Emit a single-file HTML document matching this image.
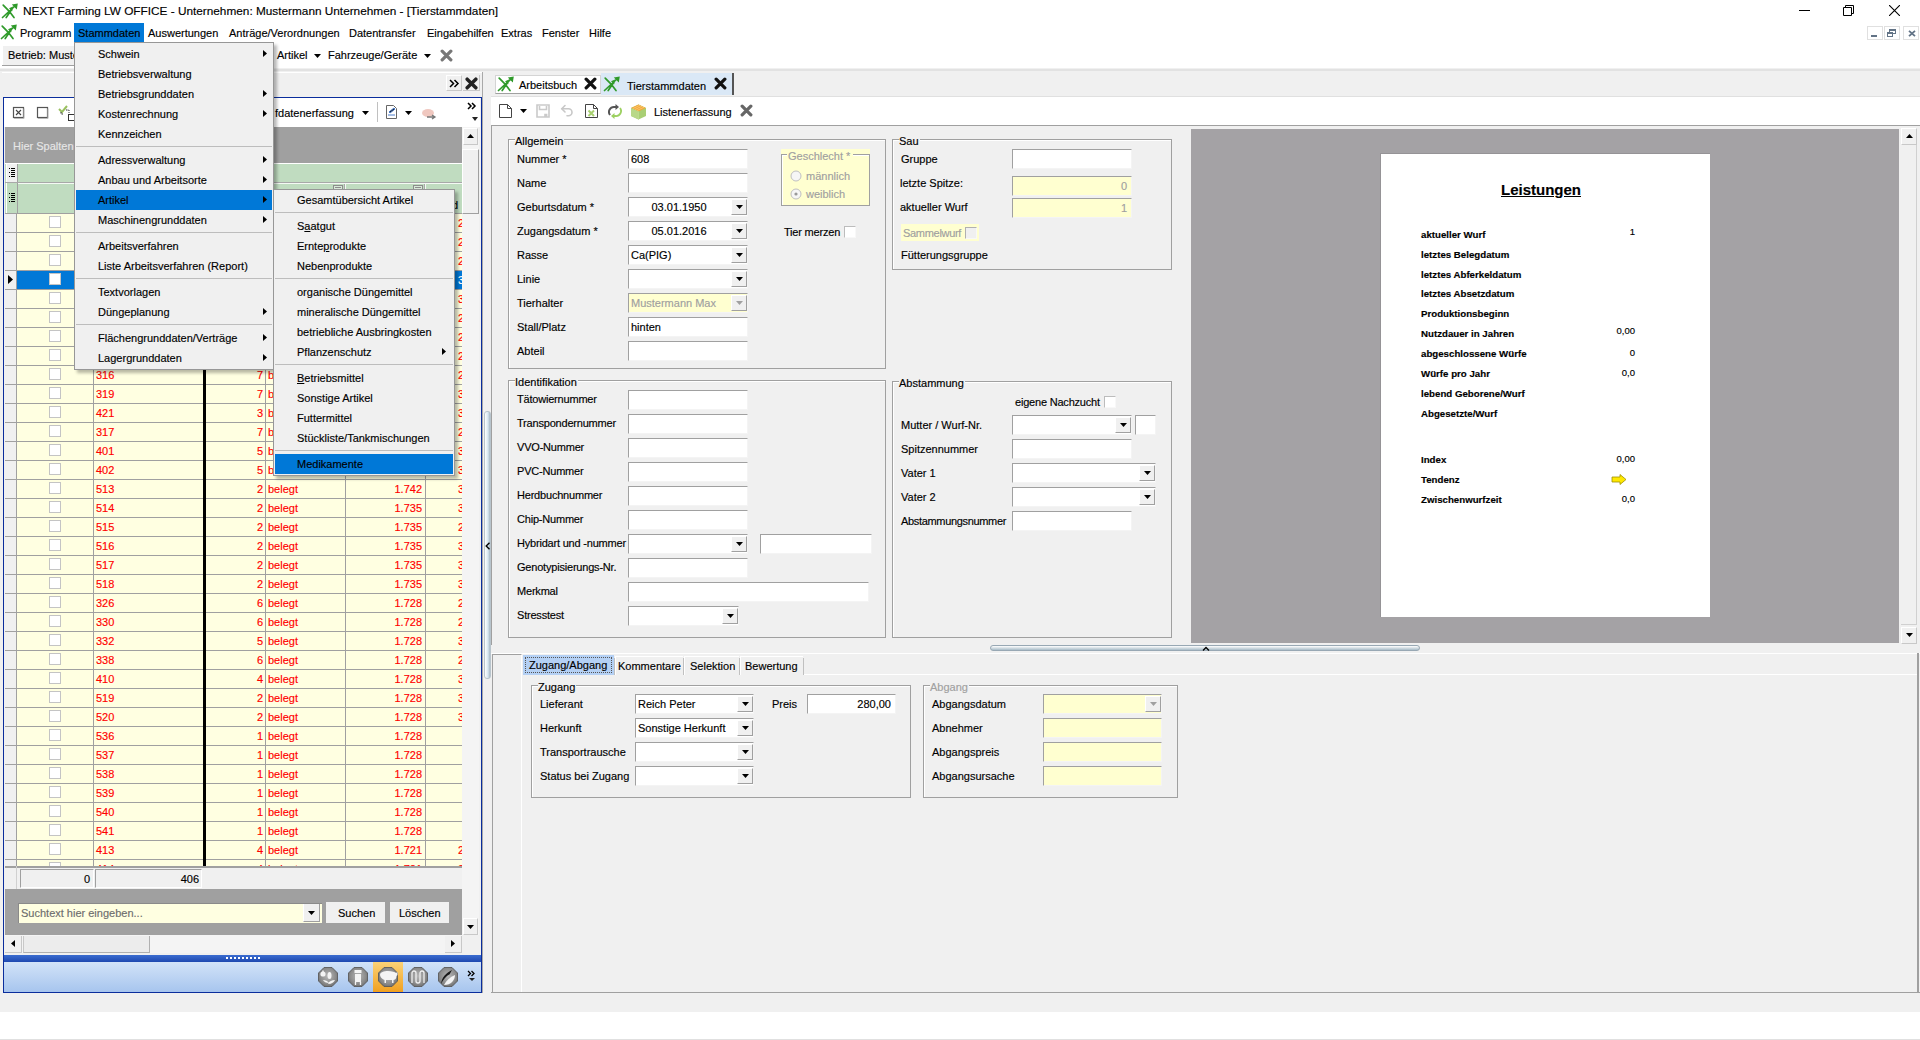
<!DOCTYPE html>
<html><head><meta charset="utf-8"><title>NEXT Farming LW OFFICE</title>
<style>
*{margin:0;padding:0;box-sizing:border-box}
html,body{width:1920px;height:1040px;overflow:hidden;background:#fff}
body{position:relative;font-family:"Liberation Sans",sans-serif;font-size:11px;color:#000}
div,svg{position:absolute}
.t{white-space:nowrap;-webkit-text-stroke:0.15px currentColor}
.inp{border-top:1px solid #a0a0a0;border-left:1px solid #a0a0a0;border-right:1px solid #f4f4f4;border-bottom:1px solid #f4f4f4}
.btn{background:#f0f0f0;border-top:1px solid #fff;border-left:1px solid #fff;border-right:1px solid #a0a0a0;border-bottom:1px solid #a0a0a0}
.grp{border:1px solid #a0a0a0;box-shadow:inset 1px 1px 0 #fff}
</style></head><body>
<svg style="position:absolute;left:1px;top:3px" width="18" height="16" viewBox="0 0 18 16"><path d="M1.5 14.5L14.5 2.5M5.2 14.5L10.5 6.8M2.2 2.2L7.6 7.6M9.2 9.6L13 14.5" stroke="#2f9a2a" stroke-width="1.7" stroke-linecap="round" fill="none"/><path d="M16.8 0.6L10.8 1.6L15.8 6.6Z M12 3.6L8 5.2L11.2 8.2Z" fill="#2f9a2a"/></svg><div class="t" style="left:23px;top:4px;height:14px;line-height:14px;font-size:11.8px">NEXT Farming LW OFFICE - Unternehmen: Mustermann Unternehmen - [Tierstammdaten]</div><div style="left:1799px;top:10px;width:11px;height:1px;background:#000"></div><svg style="position:absolute;left:1843px;top:5px" width="11" height="11" viewBox="0 0 11 11"><path d="M0.5 2.5h8v8h-8z M2.5 2.5v-2h8v8h-2" stroke="#000" fill="none"/></svg><svg style="position:absolute;left:1889px;top:5px" width="11" height="11" viewBox="0 0 11 11"><path d="M0 0L11 11M11 0L0 11" stroke="#000" stroke-width="1.1"/></svg><svg style="position:absolute;left:0px;top:24px" width="18" height="16" viewBox="0 0 18 16"><path d="M1.5 14.5L14.5 2.5M5.2 14.5L10.5 6.8M2.2 2.2L7.6 7.6M9.2 9.6L13 14.5" stroke="#2f9a2a" stroke-width="1.7" stroke-linecap="round" fill="none"/><path d="M16.8 0.6L10.8 1.6L15.8 6.6Z M12 3.6L8 5.2L11.2 8.2Z" fill="#2f9a2a"/></svg><div style="left:74px;top:23px;width:70px;height:19px;background:#0078d7"></div><div class="t" style="left:20px;top:26px;height:14px;line-height:14px;">Programm</div><div class="t" style="left:78px;top:26px;height:14px;line-height:14px;">Stammdaten</div><div class="t" style="left:148px;top:26px;height:14px;line-height:14px;">Auswertungen</div><div class="t" style="left:229px;top:26px;height:14px;line-height:14px;">Antr&auml;ge/Verordnungen</div><div class="t" style="left:349px;top:26px;height:14px;line-height:14px;">Datentransfer</div><div class="t" style="left:427px;top:26px;height:14px;line-height:14px;">Eingabehilfen</div><div class="t" style="left:501px;top:26px;height:14px;line-height:14px;">Extras</div><div class="t" style="left:542px;top:26px;height:14px;line-height:14px;">Fenster</div><div class="t" style="left:589px;top:26px;height:14px;line-height:14px;">Hilfe</div><div style="left:1867px;top:26px;width:16px;height:14px;border:1px solid #e0e0e0;background:#fff"></div><div style="left:1884px;top:26px;width:16px;height:14px;border:1px solid #e0e0e0;background:#fff"></div><div style="left:1903px;top:26px;width:16px;height:14px;border:1px solid #e0e0e0;background:#fff"></div><div style="left:1871px;top:35px;width:6px;height:2px;background:#627386"></div><svg style="position:absolute;left:1887px;top:29px" width="9" height="8" viewBox="0 0 9 8" shape-rendering="crispEdges"><path d="M0.5 3.5h5v4h-5z" stroke="#627386" fill="none"/><rect x="0" y="3" width="6" height="2" fill="#627386"/><path d="M2.5 2.5V0.5h6v4h-3" stroke="#627386" fill="none"/><rect x="2" y="0" width="7" height="2" fill="#627386"/></svg><svg style="position:absolute;left:1908px;top:30px" width="8" height="7" viewBox="0 0 8 7"><path d="M1 0.8L7 6.2M7 0.8L1 6.2" stroke="#627386" stroke-width="1.8"/></svg><div style="left:3px;top:46px;width:270px;height:19px;background:#f0f0f0"></div><div style="left:2px;top:65px;width:270px;height:1px;background:#a0a0a0"></div><div class="t" style="left:8px;top:48px;height:14px;line-height:14px;">Betrieb: Mustermann</div><div class="t" style="left:277px;top:48px;height:14px;line-height:14px;">Artikel</div><svg style="position:absolute;left:314px;top:54px" width="7" height="4" viewBox="0 0 7 4"><path d="M0 0H7L3.5 4Z" fill="#000"/></svg><div class="t" style="left:328px;top:48px;height:14px;line-height:14px;">Fahrzeuge/Ger&auml;te</div><svg style="position:absolute;left:424px;top:54px" width="7" height="4" viewBox="0 0 7 4"><path d="M0 0H7L3.5 4Z" fill="#000"/></svg><svg style="position:absolute;left:440px;top:49px" width="13" height="13" viewBox="0 0 12 12"><path d="M2 2L10 10M10 2L2 10" stroke="#777" stroke-width="3" stroke-linecap="round"/></svg><div style="left:0px;top:68px;width:1920px;height:944px;background:#f0f0f0"></div><div style="left:0px;top:69px;width:1920px;height:2px;background:#e2e2e2"></div><div style="left:0px;top:1012px;width:1920px;height:28px;background:#fff"></div><div style="left:0px;top:1039px;width:1920px;height:1px;background:#e0e0e0"></div><div style="left:2px;top:72px;width:480px;height:25px;background:#f0f0f0;border-top:1px solid #fff"></div><div style="left:446px;top:75px;width:16px;height:16px;background:#f0f0f0;border-right:1px solid #c8c8c8;border-bottom:1px solid #c8c8c8;border-left:1px solid #fff;border-top:1px solid #fff"></div><svg style="position:absolute;left:449px;top:79px" width="11" height="9" viewBox="0 0 11 9"><path d="M1 1l3.5 3.5-3.5 3.5M5.5 1l3.5 3.5-3.5 3.5" stroke="#000" stroke-width="1.5" fill="none"/></svg><div style="left:463px;top:75px;width:17px;height:16px;background:#f0f0f0;border-right:1px solid #c8c8c8;border-bottom:1px solid #c8c8c8"></div><svg style="position:absolute;left:465px;top:77px" width="13" height="13" viewBox="0 0 12 12"><path d="M2 2L10 10M10 2L2 10" stroke="#222" stroke-width="3.2" stroke-linecap="round"/></svg><div style="left:482px;top:72px;width:1px;height:921px;background:#a9a9a9"></div><div style="left:3px;top:97px;width:479px;height:896px;border:1px solid #0a2d9c;border-right:1.5px solid #0a2d9c;background:#f0f0f0"></div><div style="left:4px;top:98px;width:476px;height:29px;background:#fff"></div><svg style="position:absolute;left:12px;top:106px" width="14" height="14" viewBox="0 0 14 14"><rect x="1.5" y="1.5" width="10" height="10" fill="#fff" stroke="#555" stroke-width="1.2"/><path d="M12 2.5v10h-10" stroke="#bbb" fill="none"/><path d="M4 4L9 9M9 4L4 9" stroke="#444" stroke-width="1.1"/></svg><svg style="position:absolute;left:36px;top:106px" width="14" height="14" viewBox="0 0 14 14"><rect x="1.5" y="1.5" width="10" height="10" fill="#fff" stroke="#555" stroke-width="1.2"/><path d="M12 2.5v10h-10" stroke="#bbb" fill="none"/></svg><svg style="position:absolute;left:58px;top:104px" width="18" height="17" viewBox="0 0 18 17"><path d="M1 5L4 8L9 2" stroke="#9ac060" stroke-width="2" fill="none"/><path d="M3 8v2h3M8 6h3v3" stroke="#333" fill="none" stroke-dasharray="1.5 1"/><rect x="10.5" y="10.5" width="6" height="6" fill="#fff" stroke="#333"/></svg><div class="t" style="left:275px;top:106px;height:14px;line-height:14px;">fdatenerfassung</div><svg style="position:absolute;left:362px;top:111px" width="7" height="4" viewBox="0 0 7 4"><path d="M0 0H7L3.5 4Z" fill="#000"/></svg><div style="left:377px;top:102px;width:1px;height:20px;background:#c0c0c0"></div><svg style="position:absolute;left:385px;top:104px" width="14" height="16" viewBox="0 0 14 16"><path d="M1.5 1.5h7l3 3v10h-10z" fill="#fff" stroke="#666"/><path d="M4 8l5-4 1 1-5 4zM3 11h7" stroke="#4a7bc8" stroke-width="1"/></svg><svg style="position:absolute;left:405px;top:111px" width="7" height="4" viewBox="0 0 7 4"><path d="M0 0H7L3.5 4Z" fill="#000"/></svg><svg style="position:absolute;left:420px;top:108px" width="17" height="12" viewBox="0 0 17 12"><ellipse cx="8" cy="5" rx="6" ry="4" fill="#f0c8c0"/><path d="M7 9h8M12 7l3 2-3 2" stroke="#777" stroke-width="1.3" fill="none"/></svg><svg style="position:absolute;left:467px;top:102px" width="10" height="8" viewBox="0 0 10 8"><path d="M1 1l3 3-3 3M5 1l3 3-3 3" stroke="#000" stroke-width="1.5" fill="none"/></svg><svg style="position:absolute;left:472px;top:117px" width="6" height="4" viewBox="0 0 6 4"><path d="M0 0H6L3.0 4Z" fill="#222"/></svg><div style="left:5px;top:127px;width:457px;height:36px;background:#a0a0a0"></div><div class="t" style="left:13px;top:139px;height:14px;line-height:14px;color:#e6e6e6">Hier Spalten&uuml;berschrift hierher ziehen</div><div style="left:5px;top:163px;width:457px;height:1px;background:#fff"></div><div style="left:5px;top:164px;width:457px;height:18px;background:#c0dcc0"></div><div style="left:5px;top:182px;width:457px;height:1px;background:#a8a8a8"></div><div style="left:5px;top:183px;width:457px;height:30px;background:#c0dcc0"></div><div style="left:6px;top:164px;width:12px;height:18px;background:#f0f0f0;border-right:1px solid #a0a0a0;border-left:1px solid #fff"></div><svg style="position:absolute;left:9px;top:168px" width="7" height="10" viewBox="0 0 7 10" shape-rendering="crispEdges"><rect x="0" y="0" width="1" height="1" fill="#000"/><rect x="0" y="4" width="1" height="1" fill="#000"/><rect x="0" y="8" width="1" height="1" fill="#000"/><rect x="2" y="0" width="4" height="1" fill="#000"/><rect x="2" y="2" width="4" height="1" fill="#000"/><rect x="2" y="4" width="4" height="1" fill="#000"/><rect x="2" y="6" width="4" height="1" fill="#000"/><rect x="2" y="8" width="4" height="1" fill="#000"/></svg><div style="left:6px;top:183px;width:12px;height:30px;border-right:1px solid #a0a0a0;border-left:1px solid #fff"></div><svg style="position:absolute;left:9px;top:193px" width="7" height="10" viewBox="0 0 7 10" shape-rendering="crispEdges"><rect x="0" y="0" width="1" height="1" fill="#000"/><rect x="0" y="4" width="1" height="1" fill="#000"/><rect x="0" y="8" width="1" height="1" fill="#000"/><rect x="2" y="0" width="4" height="1" fill="#000"/><rect x="2" y="2" width="4" height="1" fill="#000"/><rect x="2" y="4" width="4" height="1" fill="#000"/><rect x="2" y="6" width="4" height="1" fill="#000"/><rect x="2" y="8" width="4" height="1" fill="#000"/></svg><div style="left:92px;top:184px;width:1px;height:29px;background:#a8a8a8"></div><div style="left:93px;top:184px;width:1px;height:29px;background:#f4faf4"></div><div style="left:203px;top:184px;width:1px;height:29px;background:#a8a8a8"></div><div style="left:204px;top:184px;width:1px;height:29px;background:#f4faf4"></div><div style="left:264px;top:184px;width:1px;height:29px;background:#a8a8a8"></div><div style="left:265px;top:184px;width:1px;height:29px;background:#f4faf4"></div><div style="left:344px;top:184px;width:1px;height:29px;background:#a8a8a8"></div><div style="left:345px;top:184px;width:1px;height:29px;background:#f4faf4"></div><div style="left:424px;top:184px;width:1px;height:29px;background:#a8a8a8"></div><div style="left:425px;top:184px;width:1px;height:29px;background:#f4faf4"></div><div style="left:18px;top:183px;width:444px;height:1px;background:#f4faf4"></div><div style="left:333px;top:185px;width:10px;height:8px;border:1px solid #8c8c8c;background:#d8e8d8"></div><div style="left:335px;top:187px;width:6px;height:1px;background:#8c8c8c"></div><div style="left:413px;top:185px;width:10px;height:8px;border:1px solid #8c8c8c;background:#d8e8d8"></div><div style="left:415px;top:187px;width:6px;height:1px;background:#8c8c8c"></div><div class="t" style="left:452px;top:198px;height:14px;line-height:14px;">d</div><div style="left:5px;top:213px;width:457px;height:1px;background:#a0a0a0"></div><div style="left:5px;top:214px;width:457px;height:652px;overflow:hidden;background:#ffffe1"><div style="left:0;top:0px;width:457px;height:19px;background:#ffffe1;border-bottom:1px solid #a0a0a0"></div><div style="left:0;top:0px;width:12px;height:19px;background:#f0f0f0;border-right:1px solid #a0a0a0;border-bottom:1px solid #a0a0a0"></div><div style="left:88px;top:0px;width:1px;height:19px;background:#a0a0a0"></div><div style="left:340px;top:0px;width:1px;height:19px;background:#a0a0a0"></div><div style="left:420px;top:0px;width:1px;height:19px;background:#a0a0a0"></div><div style="left:260px;top:0px;width:1px;height:19px;background:#a0a0a0"></div><div style="left:198px;top:0px;width:3px;height:19px;background:#000"></div><div style="left:44px;top:2px;width:12px;height:12px;background:#fff;border:1px solid #c4c4c4"></div><div class="t" style="left:201px;top:2px;width:57px;text-align:right;line-height:14px;color:#f00">2</div><div class="t" style="left:453px;top:2px;line-height:14px;color:#f00">2</div><div style="left:0;top:19px;width:457px;height:19px;background:#ffffe1;border-bottom:1px solid #a0a0a0"></div><div style="left:0;top:19px;width:12px;height:19px;background:#f0f0f0;border-right:1px solid #a0a0a0;border-bottom:1px solid #a0a0a0"></div><div style="left:88px;top:19px;width:1px;height:19px;background:#a0a0a0"></div><div style="left:340px;top:19px;width:1px;height:19px;background:#a0a0a0"></div><div style="left:420px;top:19px;width:1px;height:19px;background:#a0a0a0"></div><div style="left:260px;top:19px;width:1px;height:19px;background:#a0a0a0"></div><div style="left:198px;top:19px;width:3px;height:19px;background:#000"></div><div style="left:44px;top:21px;width:12px;height:12px;background:#fff;border:1px solid #c4c4c4"></div><div class="t" style="left:201px;top:21px;width:57px;text-align:right;line-height:14px;color:#f00">2</div><div class="t" style="left:453px;top:21px;line-height:14px;color:#f00">2</div><div style="left:0;top:38px;width:457px;height:19px;background:#ffffe1;border-bottom:1px solid #a0a0a0"></div><div style="left:0;top:38px;width:12px;height:19px;background:#f0f0f0;border-right:1px solid #a0a0a0;border-bottom:1px solid #a0a0a0"></div><div style="left:88px;top:38px;width:1px;height:19px;background:#a0a0a0"></div><div style="left:340px;top:38px;width:1px;height:19px;background:#a0a0a0"></div><div style="left:420px;top:38px;width:1px;height:19px;background:#a0a0a0"></div><div style="left:260px;top:38px;width:1px;height:19px;background:#a0a0a0"></div><div style="left:198px;top:38px;width:3px;height:19px;background:#000"></div><div style="left:44px;top:40px;width:12px;height:12px;background:#fff;border:1px solid #c4c4c4"></div><div class="t" style="left:201px;top:40px;width:57px;text-align:right;line-height:14px;color:#f00">2</div><div class="t" style="left:453px;top:40px;line-height:14px;color:#f00">2</div><div style="left:0;top:57px;width:457px;height:19px;background:#0078d7;border-bottom:1px solid #a0a0a0"></div><div style="left:0;top:57px;width:12px;height:19px;background:#f0f0f0;border-right:1px solid #a0a0a0;border-bottom:1px solid #a0a0a0"></div><svg style="position:absolute;left:3px;top:61px" width="5" height="9" viewBox="0 0 5 9"><path d="M0 0L5 4.5L0 9Z" fill="#000"/></svg><div style="left:88px;top:57px;width:1px;height:19px;background:#a0a0a0"></div><div style="left:340px;top:57px;width:1px;height:19px;background:#a0a0a0"></div><div style="left:420px;top:57px;width:1px;height:19px;background:#a0a0a0"></div><div style="left:260px;top:57px;width:1px;height:19px;background:#a0a0a0"></div><div style="left:198px;top:57px;width:3px;height:19px;background:#000"></div><div style="left:44px;top:59px;width:12px;height:12px;background:#fff;border:1px solid #c4c4c4"></div><div class="t" style="left:201px;top:59px;width:57px;text-align:right;line-height:14px;color:#fff">2</div><div class="t" style="left:453px;top:59px;line-height:14px;color:#fff">3</div><div style="left:0;top:76px;width:457px;height:19px;background:#ffffe1;border-bottom:1px solid #a0a0a0"></div><div style="left:0;top:76px;width:12px;height:19px;background:#f0f0f0;border-right:1px solid #a0a0a0;border-bottom:1px solid #a0a0a0"></div><div style="left:88px;top:76px;width:1px;height:19px;background:#a0a0a0"></div><div style="left:340px;top:76px;width:1px;height:19px;background:#a0a0a0"></div><div style="left:420px;top:76px;width:1px;height:19px;background:#a0a0a0"></div><div style="left:260px;top:76px;width:1px;height:19px;background:#a0a0a0"></div><div style="left:198px;top:76px;width:3px;height:19px;background:#000"></div><div style="left:44px;top:78px;width:12px;height:12px;background:#fff;border:1px solid #c4c4c4"></div><div class="t" style="left:201px;top:78px;width:57px;text-align:right;line-height:14px;color:#f00">2</div><div class="t" style="left:453px;top:78px;line-height:14px;color:#f00">3</div><div style="left:0;top:95px;width:457px;height:19px;background:#ffffe1;border-bottom:1px solid #a0a0a0"></div><div style="left:0;top:95px;width:12px;height:19px;background:#f0f0f0;border-right:1px solid #a0a0a0;border-bottom:1px solid #a0a0a0"></div><div style="left:88px;top:95px;width:1px;height:19px;background:#a0a0a0"></div><div style="left:340px;top:95px;width:1px;height:19px;background:#a0a0a0"></div><div style="left:420px;top:95px;width:1px;height:19px;background:#a0a0a0"></div><div style="left:260px;top:95px;width:1px;height:19px;background:#a0a0a0"></div><div style="left:198px;top:95px;width:3px;height:19px;background:#000"></div><div style="left:44px;top:97px;width:12px;height:12px;background:#fff;border:1px solid #c4c4c4"></div><div class="t" style="left:201px;top:97px;width:57px;text-align:right;line-height:14px;color:#f00">2</div><div class="t" style="left:453px;top:97px;line-height:14px;color:#f00">2</div><div style="left:0;top:114px;width:457px;height:19px;background:#ffffe1;border-bottom:1px solid #a0a0a0"></div><div style="left:0;top:114px;width:12px;height:19px;background:#f0f0f0;border-right:1px solid #a0a0a0;border-bottom:1px solid #a0a0a0"></div><div style="left:88px;top:114px;width:1px;height:19px;background:#a0a0a0"></div><div style="left:340px;top:114px;width:1px;height:19px;background:#a0a0a0"></div><div style="left:420px;top:114px;width:1px;height:19px;background:#a0a0a0"></div><div style="left:260px;top:114px;width:1px;height:19px;background:#a0a0a0"></div><div style="left:198px;top:114px;width:3px;height:19px;background:#000"></div><div style="left:44px;top:116px;width:12px;height:12px;background:#fff;border:1px solid #c4c4c4"></div><div class="t" style="left:201px;top:116px;width:57px;text-align:right;line-height:14px;color:#f00">2</div><div class="t" style="left:453px;top:116px;line-height:14px;color:#f00">2</div><div style="left:0;top:133px;width:457px;height:19px;background:#ffffe1;border-bottom:1px solid #a0a0a0"></div><div style="left:0;top:133px;width:12px;height:19px;background:#f0f0f0;border-right:1px solid #a0a0a0;border-bottom:1px solid #a0a0a0"></div><div style="left:88px;top:133px;width:1px;height:19px;background:#a0a0a0"></div><div style="left:340px;top:133px;width:1px;height:19px;background:#a0a0a0"></div><div style="left:420px;top:133px;width:1px;height:19px;background:#a0a0a0"></div><div style="left:260px;top:133px;width:1px;height:19px;background:#a0a0a0"></div><div style="left:198px;top:133px;width:3px;height:19px;background:#000"></div><div style="left:44px;top:135px;width:12px;height:12px;background:#fff;border:1px solid #c4c4c4"></div><div class="t" style="left:201px;top:135px;width:57px;text-align:right;line-height:14px;color:#f00">2</div><div class="t" style="left:453px;top:135px;line-height:14px;color:#f00">2</div><div style="left:0;top:152px;width:457px;height:19px;background:#ffffe1;border-bottom:1px solid #a0a0a0"></div><div style="left:0;top:152px;width:12px;height:19px;background:#f0f0f0;border-right:1px solid #a0a0a0;border-bottom:1px solid #a0a0a0"></div><div style="left:88px;top:152px;width:1px;height:19px;background:#a0a0a0"></div><div style="left:340px;top:152px;width:1px;height:19px;background:#a0a0a0"></div><div style="left:420px;top:152px;width:1px;height:19px;background:#a0a0a0"></div><div style="left:260px;top:152px;width:1px;height:19px;background:#a0a0a0"></div><div style="left:198px;top:152px;width:3px;height:19px;background:#000"></div><div style="left:44px;top:154px;width:12px;height:12px;background:#fff;border:1px solid #c4c4c4"></div><div class="t" style="left:91px;top:154px;line-height:14px;color:#f00">316</div><div class="t" style="left:201px;top:154px;width:57px;text-align:right;line-height:14px;color:#f00">7</div><div class="t" style="left:263px;top:154px;line-height:14px;color:#f00">belegt</div><div class="t" style="left:341px;top:154px;width:76px;text-align:right;line-height:14px;color:#f00">1.746</div><div class="t" style="left:453px;top:154px;line-height:14px;color:#f00">2</div><div style="left:0;top:171px;width:457px;height:19px;background:#ffffe1;border-bottom:1px solid #a0a0a0"></div><div style="left:0;top:171px;width:12px;height:19px;background:#f0f0f0;border-right:1px solid #a0a0a0;border-bottom:1px solid #a0a0a0"></div><div style="left:88px;top:171px;width:1px;height:19px;background:#a0a0a0"></div><div style="left:340px;top:171px;width:1px;height:19px;background:#a0a0a0"></div><div style="left:420px;top:171px;width:1px;height:19px;background:#a0a0a0"></div><div style="left:260px;top:171px;width:1px;height:19px;background:#a0a0a0"></div><div style="left:198px;top:171px;width:3px;height:19px;background:#000"></div><div style="left:44px;top:173px;width:12px;height:12px;background:#fff;border:1px solid #c4c4c4"></div><div class="t" style="left:91px;top:173px;line-height:14px;color:#f00">319</div><div class="t" style="left:201px;top:173px;width:57px;text-align:right;line-height:14px;color:#f00">7</div><div class="t" style="left:263px;top:173px;line-height:14px;color:#f00">belegt</div><div class="t" style="left:341px;top:173px;width:76px;text-align:right;line-height:14px;color:#f00">1.746</div><div class="t" style="left:453px;top:173px;line-height:14px;color:#f00">3</div><div style="left:0;top:190px;width:457px;height:19px;background:#ffffe1;border-bottom:1px solid #a0a0a0"></div><div style="left:0;top:190px;width:12px;height:19px;background:#f0f0f0;border-right:1px solid #a0a0a0;border-bottom:1px solid #a0a0a0"></div><div style="left:88px;top:190px;width:1px;height:19px;background:#a0a0a0"></div><div style="left:340px;top:190px;width:1px;height:19px;background:#a0a0a0"></div><div style="left:420px;top:190px;width:1px;height:19px;background:#a0a0a0"></div><div style="left:260px;top:190px;width:1px;height:19px;background:#a0a0a0"></div><div style="left:198px;top:190px;width:3px;height:19px;background:#000"></div><div style="left:44px;top:192px;width:12px;height:12px;background:#fff;border:1px solid #c4c4c4"></div><div class="t" style="left:91px;top:192px;line-height:14px;color:#f00">421</div><div class="t" style="left:201px;top:192px;width:57px;text-align:right;line-height:14px;color:#f00">3</div><div class="t" style="left:263px;top:192px;line-height:14px;color:#f00">belegt</div><div class="t" style="left:341px;top:192px;width:76px;text-align:right;line-height:14px;color:#f00">1.742</div><div class="t" style="left:453px;top:192px;line-height:14px;color:#f00">3</div><div style="left:0;top:209px;width:457px;height:19px;background:#ffffe1;border-bottom:1px solid #a0a0a0"></div><div style="left:0;top:209px;width:12px;height:19px;background:#f0f0f0;border-right:1px solid #a0a0a0;border-bottom:1px solid #a0a0a0"></div><div style="left:88px;top:209px;width:1px;height:19px;background:#a0a0a0"></div><div style="left:340px;top:209px;width:1px;height:19px;background:#a0a0a0"></div><div style="left:420px;top:209px;width:1px;height:19px;background:#a0a0a0"></div><div style="left:260px;top:209px;width:1px;height:19px;background:#a0a0a0"></div><div style="left:198px;top:209px;width:3px;height:19px;background:#000"></div><div style="left:44px;top:211px;width:12px;height:12px;background:#fff;border:1px solid #c4c4c4"></div><div class="t" style="left:91px;top:211px;line-height:14px;color:#f00">317</div><div class="t" style="left:201px;top:211px;width:57px;text-align:right;line-height:14px;color:#f00">7</div><div class="t" style="left:263px;top:211px;line-height:14px;color:#f00">belegt</div><div class="t" style="left:341px;top:211px;width:76px;text-align:right;line-height:14px;color:#f00">1.742</div><div class="t" style="left:453px;top:211px;line-height:14px;color:#f00">2</div><div style="left:0;top:228px;width:457px;height:19px;background:#ffffe1;border-bottom:1px solid #a0a0a0"></div><div style="left:0;top:228px;width:12px;height:19px;background:#f0f0f0;border-right:1px solid #a0a0a0;border-bottom:1px solid #a0a0a0"></div><div style="left:88px;top:228px;width:1px;height:19px;background:#a0a0a0"></div><div style="left:340px;top:228px;width:1px;height:19px;background:#a0a0a0"></div><div style="left:420px;top:228px;width:1px;height:19px;background:#a0a0a0"></div><div style="left:260px;top:228px;width:1px;height:19px;background:#a0a0a0"></div><div style="left:198px;top:228px;width:3px;height:19px;background:#000"></div><div style="left:44px;top:230px;width:12px;height:12px;background:#fff;border:1px solid #c4c4c4"></div><div class="t" style="left:91px;top:230px;line-height:14px;color:#f00">401</div><div class="t" style="left:201px;top:230px;width:57px;text-align:right;line-height:14px;color:#f00">5</div><div class="t" style="left:263px;top:230px;line-height:14px;color:#f00">belegt</div><div class="t" style="left:341px;top:230px;width:76px;text-align:right;line-height:14px;color:#f00">1.742</div><div class="t" style="left:453px;top:230px;line-height:14px;color:#f00">3</div><div style="left:0;top:247px;width:457px;height:19px;background:#ffffe1;border-bottom:1px solid #a0a0a0"></div><div style="left:0;top:247px;width:12px;height:19px;background:#f0f0f0;border-right:1px solid #a0a0a0;border-bottom:1px solid #a0a0a0"></div><div style="left:88px;top:247px;width:1px;height:19px;background:#a0a0a0"></div><div style="left:340px;top:247px;width:1px;height:19px;background:#a0a0a0"></div><div style="left:420px;top:247px;width:1px;height:19px;background:#a0a0a0"></div><div style="left:260px;top:247px;width:1px;height:19px;background:#a0a0a0"></div><div style="left:198px;top:247px;width:3px;height:19px;background:#000"></div><div style="left:44px;top:249px;width:12px;height:12px;background:#fff;border:1px solid #c4c4c4"></div><div class="t" style="left:91px;top:249px;line-height:14px;color:#f00">402</div><div class="t" style="left:201px;top:249px;width:57px;text-align:right;line-height:14px;color:#f00">5</div><div class="t" style="left:263px;top:249px;line-height:14px;color:#f00">belegt</div><div class="t" style="left:341px;top:249px;width:76px;text-align:right;line-height:14px;color:#f00">1.742</div><div class="t" style="left:453px;top:249px;line-height:14px;color:#f00">3</div><div style="left:0;top:266px;width:457px;height:19px;background:#ffffe1;border-bottom:1px solid #a0a0a0"></div><div style="left:0;top:266px;width:12px;height:19px;background:#f0f0f0;border-right:1px solid #a0a0a0;border-bottom:1px solid #a0a0a0"></div><div style="left:88px;top:266px;width:1px;height:19px;background:#a0a0a0"></div><div style="left:340px;top:266px;width:1px;height:19px;background:#a0a0a0"></div><div style="left:420px;top:266px;width:1px;height:19px;background:#a0a0a0"></div><div style="left:260px;top:266px;width:1px;height:19px;background:#a0a0a0"></div><div style="left:198px;top:266px;width:3px;height:19px;background:#000"></div><div style="left:44px;top:268px;width:12px;height:12px;background:#fff;border:1px solid #c4c4c4"></div><div class="t" style="left:91px;top:268px;line-height:14px;color:#f00">513</div><div class="t" style="left:201px;top:268px;width:57px;text-align:right;line-height:14px;color:#f00">2</div><div class="t" style="left:263px;top:268px;line-height:14px;color:#f00">belegt</div><div class="t" style="left:341px;top:268px;width:76px;text-align:right;line-height:14px;color:#f00">1.742</div><div class="t" style="left:453px;top:268px;line-height:14px;color:#f00">3</div><div style="left:0;top:285px;width:457px;height:19px;background:#ffffe1;border-bottom:1px solid #a0a0a0"></div><div style="left:0;top:285px;width:12px;height:19px;background:#f0f0f0;border-right:1px solid #a0a0a0;border-bottom:1px solid #a0a0a0"></div><div style="left:88px;top:285px;width:1px;height:19px;background:#a0a0a0"></div><div style="left:340px;top:285px;width:1px;height:19px;background:#a0a0a0"></div><div style="left:420px;top:285px;width:1px;height:19px;background:#a0a0a0"></div><div style="left:260px;top:285px;width:1px;height:19px;background:#a0a0a0"></div><div style="left:198px;top:285px;width:3px;height:19px;background:#000"></div><div style="left:44px;top:287px;width:12px;height:12px;background:#fff;border:1px solid #c4c4c4"></div><div class="t" style="left:91px;top:287px;line-height:14px;color:#f00">514</div><div class="t" style="left:201px;top:287px;width:57px;text-align:right;line-height:14px;color:#f00">2</div><div class="t" style="left:263px;top:287px;line-height:14px;color:#f00">belegt</div><div class="t" style="left:341px;top:287px;width:76px;text-align:right;line-height:14px;color:#f00">1.735</div><div class="t" style="left:453px;top:287px;line-height:14px;color:#f00">3</div><div style="left:0;top:304px;width:457px;height:19px;background:#ffffe1;border-bottom:1px solid #a0a0a0"></div><div style="left:0;top:304px;width:12px;height:19px;background:#f0f0f0;border-right:1px solid #a0a0a0;border-bottom:1px solid #a0a0a0"></div><div style="left:88px;top:304px;width:1px;height:19px;background:#a0a0a0"></div><div style="left:340px;top:304px;width:1px;height:19px;background:#a0a0a0"></div><div style="left:420px;top:304px;width:1px;height:19px;background:#a0a0a0"></div><div style="left:260px;top:304px;width:1px;height:19px;background:#a0a0a0"></div><div style="left:198px;top:304px;width:3px;height:19px;background:#000"></div><div style="left:44px;top:306px;width:12px;height:12px;background:#fff;border:1px solid #c4c4c4"></div><div class="t" style="left:91px;top:306px;line-height:14px;color:#f00">515</div><div class="t" style="left:201px;top:306px;width:57px;text-align:right;line-height:14px;color:#f00">2</div><div class="t" style="left:263px;top:306px;line-height:14px;color:#f00">belegt</div><div class="t" style="left:341px;top:306px;width:76px;text-align:right;line-height:14px;color:#f00">1.735</div><div class="t" style="left:453px;top:306px;line-height:14px;color:#f00">2</div><div style="left:0;top:323px;width:457px;height:19px;background:#ffffe1;border-bottom:1px solid #a0a0a0"></div><div style="left:0;top:323px;width:12px;height:19px;background:#f0f0f0;border-right:1px solid #a0a0a0;border-bottom:1px solid #a0a0a0"></div><div style="left:88px;top:323px;width:1px;height:19px;background:#a0a0a0"></div><div style="left:340px;top:323px;width:1px;height:19px;background:#a0a0a0"></div><div style="left:420px;top:323px;width:1px;height:19px;background:#a0a0a0"></div><div style="left:260px;top:323px;width:1px;height:19px;background:#a0a0a0"></div><div style="left:198px;top:323px;width:3px;height:19px;background:#000"></div><div style="left:44px;top:325px;width:12px;height:12px;background:#fff;border:1px solid #c4c4c4"></div><div class="t" style="left:91px;top:325px;line-height:14px;color:#f00">516</div><div class="t" style="left:201px;top:325px;width:57px;text-align:right;line-height:14px;color:#f00">2</div><div class="t" style="left:263px;top:325px;line-height:14px;color:#f00">belegt</div><div class="t" style="left:341px;top:325px;width:76px;text-align:right;line-height:14px;color:#f00">1.735</div><div class="t" style="left:453px;top:325px;line-height:14px;color:#f00">3</div><div style="left:0;top:342px;width:457px;height:19px;background:#ffffe1;border-bottom:1px solid #a0a0a0"></div><div style="left:0;top:342px;width:12px;height:19px;background:#f0f0f0;border-right:1px solid #a0a0a0;border-bottom:1px solid #a0a0a0"></div><div style="left:88px;top:342px;width:1px;height:19px;background:#a0a0a0"></div><div style="left:340px;top:342px;width:1px;height:19px;background:#a0a0a0"></div><div style="left:420px;top:342px;width:1px;height:19px;background:#a0a0a0"></div><div style="left:260px;top:342px;width:1px;height:19px;background:#a0a0a0"></div><div style="left:198px;top:342px;width:3px;height:19px;background:#000"></div><div style="left:44px;top:344px;width:12px;height:12px;background:#fff;border:1px solid #c4c4c4"></div><div class="t" style="left:91px;top:344px;line-height:14px;color:#f00">517</div><div class="t" style="left:201px;top:344px;width:57px;text-align:right;line-height:14px;color:#f00">2</div><div class="t" style="left:263px;top:344px;line-height:14px;color:#f00">belegt</div><div class="t" style="left:341px;top:344px;width:76px;text-align:right;line-height:14px;color:#f00">1.735</div><div class="t" style="left:453px;top:344px;line-height:14px;color:#f00">3</div><div style="left:0;top:361px;width:457px;height:19px;background:#ffffe1;border-bottom:1px solid #a0a0a0"></div><div style="left:0;top:361px;width:12px;height:19px;background:#f0f0f0;border-right:1px solid #a0a0a0;border-bottom:1px solid #a0a0a0"></div><div style="left:88px;top:361px;width:1px;height:19px;background:#a0a0a0"></div><div style="left:340px;top:361px;width:1px;height:19px;background:#a0a0a0"></div><div style="left:420px;top:361px;width:1px;height:19px;background:#a0a0a0"></div><div style="left:260px;top:361px;width:1px;height:19px;background:#a0a0a0"></div><div style="left:198px;top:361px;width:3px;height:19px;background:#000"></div><div style="left:44px;top:363px;width:12px;height:12px;background:#fff;border:1px solid #c4c4c4"></div><div class="t" style="left:91px;top:363px;line-height:14px;color:#f00">518</div><div class="t" style="left:201px;top:363px;width:57px;text-align:right;line-height:14px;color:#f00">2</div><div class="t" style="left:263px;top:363px;line-height:14px;color:#f00">belegt</div><div class="t" style="left:341px;top:363px;width:76px;text-align:right;line-height:14px;color:#f00">1.735</div><div class="t" style="left:453px;top:363px;line-height:14px;color:#f00">3</div><div style="left:0;top:380px;width:457px;height:19px;background:#ffffe1;border-bottom:1px solid #a0a0a0"></div><div style="left:0;top:380px;width:12px;height:19px;background:#f0f0f0;border-right:1px solid #a0a0a0;border-bottom:1px solid #a0a0a0"></div><div style="left:88px;top:380px;width:1px;height:19px;background:#a0a0a0"></div><div style="left:340px;top:380px;width:1px;height:19px;background:#a0a0a0"></div><div style="left:420px;top:380px;width:1px;height:19px;background:#a0a0a0"></div><div style="left:260px;top:380px;width:1px;height:19px;background:#a0a0a0"></div><div style="left:198px;top:380px;width:3px;height:19px;background:#000"></div><div style="left:44px;top:382px;width:12px;height:12px;background:#fff;border:1px solid #c4c4c4"></div><div class="t" style="left:91px;top:382px;line-height:14px;color:#f00">326</div><div class="t" style="left:201px;top:382px;width:57px;text-align:right;line-height:14px;color:#f00">6</div><div class="t" style="left:263px;top:382px;line-height:14px;color:#f00">belegt</div><div class="t" style="left:341px;top:382px;width:76px;text-align:right;line-height:14px;color:#f00">1.728</div><div class="t" style="left:453px;top:382px;line-height:14px;color:#f00">2</div><div style="left:0;top:399px;width:457px;height:19px;background:#ffffe1;border-bottom:1px solid #a0a0a0"></div><div style="left:0;top:399px;width:12px;height:19px;background:#f0f0f0;border-right:1px solid #a0a0a0;border-bottom:1px solid #a0a0a0"></div><div style="left:88px;top:399px;width:1px;height:19px;background:#a0a0a0"></div><div style="left:340px;top:399px;width:1px;height:19px;background:#a0a0a0"></div><div style="left:420px;top:399px;width:1px;height:19px;background:#a0a0a0"></div><div style="left:260px;top:399px;width:1px;height:19px;background:#a0a0a0"></div><div style="left:198px;top:399px;width:3px;height:19px;background:#000"></div><div style="left:44px;top:401px;width:12px;height:12px;background:#fff;border:1px solid #c4c4c4"></div><div class="t" style="left:91px;top:401px;line-height:14px;color:#f00">330</div><div class="t" style="left:201px;top:401px;width:57px;text-align:right;line-height:14px;color:#f00">6</div><div class="t" style="left:263px;top:401px;line-height:14px;color:#f00">belegt</div><div class="t" style="left:341px;top:401px;width:76px;text-align:right;line-height:14px;color:#f00">1.728</div><div class="t" style="left:453px;top:401px;line-height:14px;color:#f00">2</div><div style="left:0;top:418px;width:457px;height:19px;background:#ffffe1;border-bottom:1px solid #a0a0a0"></div><div style="left:0;top:418px;width:12px;height:19px;background:#f0f0f0;border-right:1px solid #a0a0a0;border-bottom:1px solid #a0a0a0"></div><div style="left:88px;top:418px;width:1px;height:19px;background:#a0a0a0"></div><div style="left:340px;top:418px;width:1px;height:19px;background:#a0a0a0"></div><div style="left:420px;top:418px;width:1px;height:19px;background:#a0a0a0"></div><div style="left:260px;top:418px;width:1px;height:19px;background:#a0a0a0"></div><div style="left:198px;top:418px;width:3px;height:19px;background:#000"></div><div style="left:44px;top:420px;width:12px;height:12px;background:#fff;border:1px solid #c4c4c4"></div><div class="t" style="left:91px;top:420px;line-height:14px;color:#f00">332</div><div class="t" style="left:201px;top:420px;width:57px;text-align:right;line-height:14px;color:#f00">5</div><div class="t" style="left:263px;top:420px;line-height:14px;color:#f00">belegt</div><div class="t" style="left:341px;top:420px;width:76px;text-align:right;line-height:14px;color:#f00">1.728</div><div class="t" style="left:453px;top:420px;line-height:14px;color:#f00">3</div><div style="left:0;top:437px;width:457px;height:19px;background:#ffffe1;border-bottom:1px solid #a0a0a0"></div><div style="left:0;top:437px;width:12px;height:19px;background:#f0f0f0;border-right:1px solid #a0a0a0;border-bottom:1px solid #a0a0a0"></div><div style="left:88px;top:437px;width:1px;height:19px;background:#a0a0a0"></div><div style="left:340px;top:437px;width:1px;height:19px;background:#a0a0a0"></div><div style="left:420px;top:437px;width:1px;height:19px;background:#a0a0a0"></div><div style="left:260px;top:437px;width:1px;height:19px;background:#a0a0a0"></div><div style="left:198px;top:437px;width:3px;height:19px;background:#000"></div><div style="left:44px;top:439px;width:12px;height:12px;background:#fff;border:1px solid #c4c4c4"></div><div class="t" style="left:91px;top:439px;line-height:14px;color:#f00">338</div><div class="t" style="left:201px;top:439px;width:57px;text-align:right;line-height:14px;color:#f00">6</div><div class="t" style="left:263px;top:439px;line-height:14px;color:#f00">belegt</div><div class="t" style="left:341px;top:439px;width:76px;text-align:right;line-height:14px;color:#f00">1.728</div><div class="t" style="left:453px;top:439px;line-height:14px;color:#f00">2</div><div style="left:0;top:456px;width:457px;height:19px;background:#ffffe1;border-bottom:1px solid #a0a0a0"></div><div style="left:0;top:456px;width:12px;height:19px;background:#f0f0f0;border-right:1px solid #a0a0a0;border-bottom:1px solid #a0a0a0"></div><div style="left:88px;top:456px;width:1px;height:19px;background:#a0a0a0"></div><div style="left:340px;top:456px;width:1px;height:19px;background:#a0a0a0"></div><div style="left:420px;top:456px;width:1px;height:19px;background:#a0a0a0"></div><div style="left:260px;top:456px;width:1px;height:19px;background:#a0a0a0"></div><div style="left:198px;top:456px;width:3px;height:19px;background:#000"></div><div style="left:44px;top:458px;width:12px;height:12px;background:#fff;border:1px solid #c4c4c4"></div><div class="t" style="left:91px;top:458px;line-height:14px;color:#f00">410</div><div class="t" style="left:201px;top:458px;width:57px;text-align:right;line-height:14px;color:#f00">4</div><div class="t" style="left:263px;top:458px;line-height:14px;color:#f00">belegt</div><div class="t" style="left:341px;top:458px;width:76px;text-align:right;line-height:14px;color:#f00">1.728</div><div class="t" style="left:453px;top:458px;line-height:14px;color:#f00">3</div><div style="left:0;top:475px;width:457px;height:19px;background:#ffffe1;border-bottom:1px solid #a0a0a0"></div><div style="left:0;top:475px;width:12px;height:19px;background:#f0f0f0;border-right:1px solid #a0a0a0;border-bottom:1px solid #a0a0a0"></div><div style="left:88px;top:475px;width:1px;height:19px;background:#a0a0a0"></div><div style="left:340px;top:475px;width:1px;height:19px;background:#a0a0a0"></div><div style="left:420px;top:475px;width:1px;height:19px;background:#a0a0a0"></div><div style="left:260px;top:475px;width:1px;height:19px;background:#a0a0a0"></div><div style="left:198px;top:475px;width:3px;height:19px;background:#000"></div><div style="left:44px;top:477px;width:12px;height:12px;background:#fff;border:1px solid #c4c4c4"></div><div class="t" style="left:91px;top:477px;line-height:14px;color:#f00">519</div><div class="t" style="left:201px;top:477px;width:57px;text-align:right;line-height:14px;color:#f00">2</div><div class="t" style="left:263px;top:477px;line-height:14px;color:#f00">belegt</div><div class="t" style="left:341px;top:477px;width:76px;text-align:right;line-height:14px;color:#f00">1.728</div><div class="t" style="left:453px;top:477px;line-height:14px;color:#f00">3</div><div style="left:0;top:494px;width:457px;height:19px;background:#ffffe1;border-bottom:1px solid #a0a0a0"></div><div style="left:0;top:494px;width:12px;height:19px;background:#f0f0f0;border-right:1px solid #a0a0a0;border-bottom:1px solid #a0a0a0"></div><div style="left:88px;top:494px;width:1px;height:19px;background:#a0a0a0"></div><div style="left:340px;top:494px;width:1px;height:19px;background:#a0a0a0"></div><div style="left:420px;top:494px;width:1px;height:19px;background:#a0a0a0"></div><div style="left:260px;top:494px;width:1px;height:19px;background:#a0a0a0"></div><div style="left:198px;top:494px;width:3px;height:19px;background:#000"></div><div style="left:44px;top:496px;width:12px;height:12px;background:#fff;border:1px solid #c4c4c4"></div><div class="t" style="left:91px;top:496px;line-height:14px;color:#f00">520</div><div class="t" style="left:201px;top:496px;width:57px;text-align:right;line-height:14px;color:#f00">2</div><div class="t" style="left:263px;top:496px;line-height:14px;color:#f00">belegt</div><div class="t" style="left:341px;top:496px;width:76px;text-align:right;line-height:14px;color:#f00">1.728</div><div class="t" style="left:453px;top:496px;line-height:14px;color:#f00">3</div><div style="left:0;top:513px;width:457px;height:19px;background:#ffffe1;border-bottom:1px solid #a0a0a0"></div><div style="left:0;top:513px;width:12px;height:19px;background:#f0f0f0;border-right:1px solid #a0a0a0;border-bottom:1px solid #a0a0a0"></div><div style="left:88px;top:513px;width:1px;height:19px;background:#a0a0a0"></div><div style="left:340px;top:513px;width:1px;height:19px;background:#a0a0a0"></div><div style="left:420px;top:513px;width:1px;height:19px;background:#a0a0a0"></div><div style="left:260px;top:513px;width:1px;height:19px;background:#a0a0a0"></div><div style="left:198px;top:513px;width:3px;height:19px;background:#000"></div><div style="left:44px;top:515px;width:12px;height:12px;background:#fff;border:1px solid #c4c4c4"></div><div class="t" style="left:91px;top:515px;line-height:14px;color:#f00">536</div><div class="t" style="left:201px;top:515px;width:57px;text-align:right;line-height:14px;color:#f00">1</div><div class="t" style="left:263px;top:515px;line-height:14px;color:#f00">belegt</div><div class="t" style="left:341px;top:515px;width:76px;text-align:right;line-height:14px;color:#f00">1.728</div><div style="left:0;top:532px;width:457px;height:19px;background:#ffffe1;border-bottom:1px solid #a0a0a0"></div><div style="left:0;top:532px;width:12px;height:19px;background:#f0f0f0;border-right:1px solid #a0a0a0;border-bottom:1px solid #a0a0a0"></div><div style="left:88px;top:532px;width:1px;height:19px;background:#a0a0a0"></div><div style="left:340px;top:532px;width:1px;height:19px;background:#a0a0a0"></div><div style="left:420px;top:532px;width:1px;height:19px;background:#a0a0a0"></div><div style="left:260px;top:532px;width:1px;height:19px;background:#a0a0a0"></div><div style="left:198px;top:532px;width:3px;height:19px;background:#000"></div><div style="left:44px;top:534px;width:12px;height:12px;background:#fff;border:1px solid #c4c4c4"></div><div class="t" style="left:91px;top:534px;line-height:14px;color:#f00">537</div><div class="t" style="left:201px;top:534px;width:57px;text-align:right;line-height:14px;color:#f00">1</div><div class="t" style="left:263px;top:534px;line-height:14px;color:#f00">belegt</div><div class="t" style="left:341px;top:534px;width:76px;text-align:right;line-height:14px;color:#f00">1.728</div><div style="left:0;top:551px;width:457px;height:19px;background:#ffffe1;border-bottom:1px solid #a0a0a0"></div><div style="left:0;top:551px;width:12px;height:19px;background:#f0f0f0;border-right:1px solid #a0a0a0;border-bottom:1px solid #a0a0a0"></div><div style="left:88px;top:551px;width:1px;height:19px;background:#a0a0a0"></div><div style="left:340px;top:551px;width:1px;height:19px;background:#a0a0a0"></div><div style="left:420px;top:551px;width:1px;height:19px;background:#a0a0a0"></div><div style="left:260px;top:551px;width:1px;height:19px;background:#a0a0a0"></div><div style="left:198px;top:551px;width:3px;height:19px;background:#000"></div><div style="left:44px;top:553px;width:12px;height:12px;background:#fff;border:1px solid #c4c4c4"></div><div class="t" style="left:91px;top:553px;line-height:14px;color:#f00">538</div><div class="t" style="left:201px;top:553px;width:57px;text-align:right;line-height:14px;color:#f00">1</div><div class="t" style="left:263px;top:553px;line-height:14px;color:#f00">belegt</div><div class="t" style="left:341px;top:553px;width:76px;text-align:right;line-height:14px;color:#f00">1.728</div><div style="left:0;top:570px;width:457px;height:19px;background:#ffffe1;border-bottom:1px solid #a0a0a0"></div><div style="left:0;top:570px;width:12px;height:19px;background:#f0f0f0;border-right:1px solid #a0a0a0;border-bottom:1px solid #a0a0a0"></div><div style="left:88px;top:570px;width:1px;height:19px;background:#a0a0a0"></div><div style="left:340px;top:570px;width:1px;height:19px;background:#a0a0a0"></div><div style="left:420px;top:570px;width:1px;height:19px;background:#a0a0a0"></div><div style="left:260px;top:570px;width:1px;height:19px;background:#a0a0a0"></div><div style="left:198px;top:570px;width:3px;height:19px;background:#000"></div><div style="left:44px;top:572px;width:12px;height:12px;background:#fff;border:1px solid #c4c4c4"></div><div class="t" style="left:91px;top:572px;line-height:14px;color:#f00">539</div><div class="t" style="left:201px;top:572px;width:57px;text-align:right;line-height:14px;color:#f00">1</div><div class="t" style="left:263px;top:572px;line-height:14px;color:#f00">belegt</div><div class="t" style="left:341px;top:572px;width:76px;text-align:right;line-height:14px;color:#f00">1.728</div><div style="left:0;top:589px;width:457px;height:19px;background:#ffffe1;border-bottom:1px solid #a0a0a0"></div><div style="left:0;top:589px;width:12px;height:19px;background:#f0f0f0;border-right:1px solid #a0a0a0;border-bottom:1px solid #a0a0a0"></div><div style="left:88px;top:589px;width:1px;height:19px;background:#a0a0a0"></div><div style="left:340px;top:589px;width:1px;height:19px;background:#a0a0a0"></div><div style="left:420px;top:589px;width:1px;height:19px;background:#a0a0a0"></div><div style="left:260px;top:589px;width:1px;height:19px;background:#a0a0a0"></div><div style="left:198px;top:589px;width:3px;height:19px;background:#000"></div><div style="left:44px;top:591px;width:12px;height:12px;background:#fff;border:1px solid #c4c4c4"></div><div class="t" style="left:91px;top:591px;line-height:14px;color:#f00">540</div><div class="t" style="left:201px;top:591px;width:57px;text-align:right;line-height:14px;color:#f00">1</div><div class="t" style="left:263px;top:591px;line-height:14px;color:#f00">belegt</div><div class="t" style="left:341px;top:591px;width:76px;text-align:right;line-height:14px;color:#f00">1.728</div><div style="left:0;top:608px;width:457px;height:19px;background:#ffffe1;border-bottom:1px solid #a0a0a0"></div><div style="left:0;top:608px;width:12px;height:19px;background:#f0f0f0;border-right:1px solid #a0a0a0;border-bottom:1px solid #a0a0a0"></div><div style="left:88px;top:608px;width:1px;height:19px;background:#a0a0a0"></div><div style="left:340px;top:608px;width:1px;height:19px;background:#a0a0a0"></div><div style="left:420px;top:608px;width:1px;height:19px;background:#a0a0a0"></div><div style="left:260px;top:608px;width:1px;height:19px;background:#a0a0a0"></div><div style="left:198px;top:608px;width:3px;height:19px;background:#000"></div><div style="left:44px;top:610px;width:12px;height:12px;background:#fff;border:1px solid #c4c4c4"></div><div class="t" style="left:91px;top:610px;line-height:14px;color:#f00">541</div><div class="t" style="left:201px;top:610px;width:57px;text-align:right;line-height:14px;color:#f00">1</div><div class="t" style="left:263px;top:610px;line-height:14px;color:#f00">belegt</div><div class="t" style="left:341px;top:610px;width:76px;text-align:right;line-height:14px;color:#f00">1.728</div><div style="left:0;top:627px;width:457px;height:19px;background:#ffffe1;border-bottom:1px solid #a0a0a0"></div><div style="left:0;top:627px;width:12px;height:19px;background:#f0f0f0;border-right:1px solid #a0a0a0;border-bottom:1px solid #a0a0a0"></div><div style="left:88px;top:627px;width:1px;height:19px;background:#a0a0a0"></div><div style="left:340px;top:627px;width:1px;height:19px;background:#a0a0a0"></div><div style="left:420px;top:627px;width:1px;height:19px;background:#a0a0a0"></div><div style="left:260px;top:627px;width:1px;height:19px;background:#a0a0a0"></div><div style="left:198px;top:627px;width:3px;height:19px;background:#000"></div><div style="left:44px;top:629px;width:12px;height:12px;background:#fff;border:1px solid #c4c4c4"></div><div class="t" style="left:91px;top:629px;line-height:14px;color:#f00">413</div><div class="t" style="left:201px;top:629px;width:57px;text-align:right;line-height:14px;color:#f00">4</div><div class="t" style="left:263px;top:629px;line-height:14px;color:#f00">belegt</div><div class="t" style="left:341px;top:629px;width:76px;text-align:right;line-height:14px;color:#f00">1.721</div><div class="t" style="left:453px;top:629px;line-height:14px;color:#f00">2</div><div style="left:0;top:646px;width:457px;height:19px;background:#ffffe1;border-bottom:1px solid #a0a0a0"></div><div style="left:0;top:646px;width:12px;height:19px;background:#f0f0f0;border-right:1px solid #a0a0a0;border-bottom:1px solid #a0a0a0"></div><div style="left:88px;top:646px;width:1px;height:19px;background:#a0a0a0"></div><div style="left:340px;top:646px;width:1px;height:19px;background:#a0a0a0"></div><div style="left:420px;top:646px;width:1px;height:19px;background:#a0a0a0"></div><div style="left:260px;top:646px;width:1px;height:19px;background:#a0a0a0"></div><div style="left:198px;top:646px;width:3px;height:19px;background:#000"></div><div style="left:44px;top:648px;width:12px;height:12px;background:#fff;border:1px solid #c4c4c4"></div><div class="t" style="left:91px;top:648px;line-height:14px;color:#f00">414</div><div class="t" style="left:201px;top:648px;width:57px;text-align:right;line-height:14px;color:#f00">4</div><div class="t" style="left:263px;top:648px;line-height:14px;color:#f00">belegt</div><div class="t" style="left:341px;top:648px;width:76px;text-align:right;line-height:14px;color:#f00">1.721</div><div class="t" style="left:453px;top:648px;line-height:14px;color:#f00">2</div></div><div style="left:5px;top:866px;width:457px;height:23px;background:#f0f0f0"></div><div style="left:5px;top:866px;width:457px;height:2px;background:#a0a0a0"></div><div style="left:5px;top:866px;width:12px;height:23px;border-right:1px solid #d0d0d0"></div><div style="left:20px;top:869px;width:74px;height:19px;border-left:1px solid #a0a0a0;border-top:1px solid #a0a0a0;border-right:1px solid #fff;border-bottom:1px solid #fff"></div><div class="t" style="left:20px;top:872px;width:70px;text-align:right;line-height:14px">0</div><div style="left:95px;top:869px;width:107px;height:19px;border-left:1px solid #a0a0a0;border-top:1px solid #a0a0a0;border-right:1px solid #fff;border-bottom:1px solid #fff"></div><div class="t" style="left:95px;top:872px;width:104px;text-align:right;line-height:14px">406</div><div style="left:5px;top:889px;width:457px;height:46px;background:#a0a0a0"></div><div style="left:18px;top:903px;width:304px;height:20px;background:#ffffe1;border-top:1px solid #8a8a8a;border-left:1px solid #8a8a8a"></div><div class="t" style="left:21px;top:906px;height:14px;line-height:14px;color:#6d6d6d">Suchtext hier eingeben...</div><div style="left:303px;top:904px;width:17px;height:18px;background:#f0f0f0;border-left:1px solid #fff;border-right:1px solid #a0a0a0;border-bottom:1px solid #a0a0a0"></div><svg style="position:absolute;left:308px;top:911px" width="7" height="4" viewBox="0 0 7 4"><path d="M0 0H7L3.5 4Z" fill="#000"/></svg><div style="left:326px;top:902px;width:59px;height:21px;background:#f0f0f0"></div><div class="t" style="left:338px;top:906px;height:14px;line-height:14px;">Suchen</div><div style="left:390px;top:902px;width:59px;height:21px;background:#f0f0f0"></div><div class="t" style="left:399px;top:906px;height:14px;line-height:14px;">L&ouml;schen</div><div style="left:462px;top:127px;width:17px;height:808px;background:#f4f4f4"></div><div style="left:463px;top:128px;width:15px;height:17px;background:#f0f0f0;border-right:1px solid #c8c8c8;border-bottom:1px solid #c8c8c8;border-top:1px solid #fff;border-left:1px solid #fff"></div><svg style="position:absolute;left:467px;top:134px" width="7" height="4" viewBox="0 0 7 4"><path d="M0 4H7L3.5 0Z" fill="#000"/></svg><div style="left:462px;top:149px;width:17px;height:65px;background:#f0f0f0;border-right:1px solid #a0a0a0;border-bottom:1px solid #a0a0a0;border-top:1px solid #fff;border-left:1px solid #fff"></div><div style="left:463px;top:918px;width:15px;height:17px;background:#f0f0f0;border-right:1px solid #c8c8c8;border-bottom:1px solid #c8c8c8;border-top:1px solid #fff;border-left:1px solid #fff"></div><svg style="position:absolute;left:467px;top:925px" width="7" height="4" viewBox="0 0 7 4"><path d="M0 0H7L3.5 4Z" fill="#000"/></svg><div style="left:5px;top:935px;width:474px;height:18px;background:#f4f4f4"></div><div style="left:5px;top:936px;width:17px;height:17px;background:#f0f0f0;border-right:1px solid #c8c8c8;border-bottom:1px solid #c8c8c8"></div><svg style="position:absolute;left:11px;top:940px" width="4" height="7" viewBox="0 0 4 7"><path d="M4 0L0 3.5L4 7Z" fill="#000"/></svg><div style="left:23px;top:936px;width:127px;height:17px;background:#ececec;border-right:1px solid #b0b0b0;border-bottom:1px solid #b0b0b0;border-left:1px solid #c8c8c8"></div><div style="left:445px;top:936px;width:17px;height:17px;background:#f0f0f0;border-right:1px solid #c8c8c8;border-bottom:1px solid #c8c8c8"></div><svg style="position:absolute;left:451px;top:940px" width="4" height="7" viewBox="0 0 4 7"><path d="M0 0L4 3.5L0 7Z" fill="#000"/></svg><div style="left:462px;top:935px;width:17px;height:18px;background:#f0f0f0"></div><div style="left:4px;top:955px;width:477px;height:7px;background:linear-gradient(#3b6dd0,#1e48b0)"></div><svg style="position:absolute;left:226px;top:957px" width="34" height="3" viewBox="0 0 34 3"><rect x="0" y="0" width="2" height="2" fill="#fff"/><rect x="4" y="0" width="2" height="2" fill="#fff"/><rect x="8" y="0" width="2" height="2" fill="#fff"/><rect x="12" y="0" width="2" height="2" fill="#fff"/><rect x="16" y="0" width="2" height="2" fill="#fff"/><rect x="20" y="0" width="2" height="2" fill="#fff"/><rect x="24" y="0" width="2" height="2" fill="#fff"/><rect x="28" y="0" width="2" height="2" fill="#fff"/><rect x="32" y="0" width="2" height="2" fill="#fff"/></svg><div style="left:4px;top:962px;width:477px;height:30px;background:linear-gradient(#d2e3f8,#a7c5ee)"></div><div style="left:373px;top:962px;width:30px;height:30px;background:linear-gradient(#fbd277,#f0a020)"></div><svg style="position:absolute;width:0;height:0"><defs><radialGradient id="oct" cx="0.5" cy="0.45" r="0.6"><stop offset="0" stop-color="#b8b8b8"/><stop offset="0.7" stop-color="#8a8a8a"/><stop offset="1" stop-color="#6a6a6a"/></radialGradient></defs></svg><svg style="position:absolute;left:318px;top:967px" width="20" height="20" viewBox="0 0 20 20"><path d="M6 0.5h8l5.5 5.5v8l-5.5 5.5h-8l-5.5-5.5v-8z" fill="url(#oct)" stroke="#5a5a5a" stroke-width="0.9"/></svg><svg style="position:absolute;left:348px;top:967px" width="20" height="20" viewBox="0 0 20 20"><path d="M6 0.5h8l5.5 5.5v8l-5.5 5.5h-8l-5.5-5.5v-8z" fill="url(#oct)" stroke="#5a5a5a" stroke-width="0.9"/></svg><svg style="position:absolute;left:378px;top:967px" width="20" height="20" viewBox="0 0 20 20"><path d="M6 0.5h8l5.5 5.5v8l-5.5 5.5h-8l-5.5-5.5v-8z" fill="url(#oct)" stroke="#5a5a5a" stroke-width="0.9"/></svg><svg style="position:absolute;left:408px;top:967px" width="20" height="20" viewBox="0 0 20 20"><path d="M6 0.5h8l5.5 5.5v8l-5.5 5.5h-8l-5.5-5.5v-8z" fill="url(#oct)" stroke="#5a5a5a" stroke-width="0.9"/></svg><svg style="position:absolute;left:438px;top:967px" width="20" height="20" viewBox="0 0 20 20"><path d="M6 0.5h8l5.5 5.5v8l-5.5 5.5h-8l-5.5-5.5v-8z" fill="url(#oct)" stroke="#5a5a5a" stroke-width="0.9"/></svg><svg style="position:absolute;left:318px;top:969px" width="20" height="16" viewBox="0 0 20 16"><circle cx="5" cy="5" r="2.6" fill="#f4f4f4"/><path d="M5 1.5v2" stroke="#f4f4f4" stroke-width="1.4"/><ellipse cx="11.5" cy="6.5" rx="2" ry="3.6" fill="#f4f4f4"/><path d="M5 11c2 0 5 1 6 3 -3 0-5-1-6-3z M10 15c1-3 4-4 7-4 -1 2-3 4-7 4z" fill="#f4f4f4"/></svg><svg style="position:absolute;left:352px;top:969px" width="12" height="17" viewBox="0 0 12 17"><rect x="2.5" y="1" width="7" height="3" fill="#f4f4f4"/><rect x="3" y="5" width="6" height="8" fill="#f4f4f4"/><path d="M3.5 13v3M8.5 13v3" stroke="#f4f4f4" stroke-width="1.3"/></svg><svg style="position:absolute;left:378px;top:970px" width="20" height="14" viewBox="0 0 20 14"><path d="M2 5c0-3 4-4 8-4s7 1 8 2l1.5-1v3l-1 1c0 3-2 4-3 4v3h-1.5v-3h-6v3h-1.5v-3c-2-1-4-2-4.5-5z" fill="#f4f4f4"/></svg><svg style="position:absolute;left:410px;top:969px" width="16" height="16" viewBox="0 0 16 16"><path d="M2 14V4a2 2 0 0 1 4 0v8a2 2 0 0 0 4 0V4a2 2 0 0 1 4 0v10" stroke="#f0f0f0" stroke-width="1.3" fill="none"/></svg><svg style="position:absolute;left:439px;top:969px" width="18" height="17" viewBox="0 0 18 17"><path d="M2 15C3 8 7 4 13 1c-1 2-2 3-2 4C7 7 4 11 2 15z" fill="#1a1a1a"/><path d="M5 16c2-4 6-8 11-10 0 5-4 10-11 10z" fill="#f4f4f4"/></svg><svg style="position:absolute;left:467px;top:970px" width="9" height="7" viewBox="0 0 9 7"><path d="M1 1l2.5 2.5-2.5 2.5M4.5 1l2.5 2.5-2.5 2.5" stroke="#000" stroke-width="1.3" fill="none"/></svg><svg style="position:absolute;left:469px;top:978px" width="6" height="3" viewBox="0 0 6 3"><path d="M0 0H6L3.0 3Z" fill="#222"/></svg><div style="left:483px;top:71px;width:8px;height:922px;background:#f0f0f0"></div><div style="left:484px;top:411px;width:7px;height:268px;background:linear-gradient(90deg,#fff,#d6e6f0 60%,#a8b8c4);border-radius:3px;border:1px solid #b8c4cc"></div><svg style="position:absolute;left:485px;top:542px" width="6" height="8" viewBox="0 0 6 8"><path d="M4.5 0.8L1.2 4 4.5 7.2" stroke="#000" stroke-width="1.4" fill="none"/></svg><div style="left:491px;top:96px;width:1429px;height:1px;background:#e0e0e0"></div><div style="left:495px;top:75px;width:106px;height:19px;background:#fff;border:1px solid #d4d4d4;border-bottom:1px solid #a0a0a0"></div><svg style="position:absolute;left:497px;top:76px" width="18" height="16" viewBox="0 0 18 16"><path d="M1.5 14.5L14.5 2.5M5.2 14.5L10.5 6.8M2.2 2.2L7.6 7.6M9.2 9.6L13 14.5" stroke="#2f9a2a" stroke-width="1.7" stroke-linecap="round" fill="none"/><path d="M16.8 0.6L10.8 1.6L15.8 6.6Z M12 3.6L8 5.2L11.2 8.2Z" fill="#2f9a2a"/></svg><div class="t" style="left:519px;top:78px;height:14px;line-height:14px;">Arbeitsbuch</div><svg style="position:absolute;left:584px;top:77px" width="13" height="13" viewBox="0 0 12 12"><path d="M2 2L10 10M10 2L2 10" stroke="#111" stroke-width="3" stroke-linecap="round"/></svg><div style="left:601px;top:73px;width:132px;height:22px;background:#dae8f6"></div><div style="left:732px;top:73px;width:2px;height:22px;background:#555"></div><svg style="position:absolute;left:603px;top:76px" width="18" height="16" viewBox="0 0 18 16"><path d="M1.5 14.5L14.5 2.5M5.2 14.5L10.5 6.8M2.2 2.2L7.6 7.6M9.2 9.6L13 14.5" stroke="#2f9a2a" stroke-width="1.7" stroke-linecap="round" fill="none"/><path d="M16.8 0.6L10.8 1.6L15.8 6.6Z M12 3.6L8 5.2L11.2 8.2Z" fill="#2f9a2a"/></svg><div class="t" style="left:627px;top:79px;height:14px;line-height:14px;">Tierstammdaten</div><svg style="position:absolute;left:714px;top:77px" width="13" height="13" viewBox="0 0 12 12"><path d="M2 2L10 10M10 2L2 10" stroke="#111" stroke-width="3" stroke-linecap="round"/></svg><div style="left:491px;top:97px;width:1429px;height:28px;background:#fff"></div><svg style="position:absolute;left:498px;top:103px" width="15" height="16" viewBox="0 0 15 16"><path d="M1.5 1.5H9.5L13.5 5.5V14.5H1.5Z" fill="#fff" stroke="#444" stroke-width="1"/><path d="M9.5 1.5V5.5H13.5" stroke="#444" fill="none"/></svg><svg style="position:absolute;left:520px;top:109px" width="7" height="4" viewBox="0 0 7 4"><path d="M0 0H7L3.5 4Z" fill="#000"/></svg><svg style="position:absolute;left:536px;top:104px" width="14" height="14" viewBox="0 0 14 14"><path d="M1 1H13V13H1Z M3.5 2V5.5H10.5V2 M9 10.5h1.6v1.6H9z" fill="none" stroke="#cacaca" stroke-width="1.6"/></svg><svg style="position:absolute;left:560px;top:104px" width="14" height="13" viewBox="0 0 14 13"><path d="M5 1.5L1.8 4.8 5 8" stroke="#c8c8c8" stroke-width="1.6" fill="none" stroke-linecap="round"/><path d="M2 4.8H8.5A3.5 3.5 0 0 1 8.5 11.8H7" stroke="#c8c8c8" stroke-width="1.6" fill="none" stroke-linecap="round"/></svg><svg style="position:absolute;left:584px;top:103px" width="15" height="16" viewBox="0 0 15 16"><path d="M1.5 1.5H9.5L13.5 5.5V14.5H1.5Z" fill="#fff" stroke="#444" stroke-width="1"/><path d="M9.5 1.5V5.5H13.5" stroke="#444" fill="none"/><path d="M4.5 7.5L10 13M10 7.5L4.5 13" stroke="#a8d070" stroke-width="2"/></svg><svg style="position:absolute;left:608px;top:104px" width="14" height="15" viewBox="0 0 14 15"><path d="M2 11A5 5 0 0 1 6.5 3H8" stroke="#555" stroke-width="2" fill="none"/><path d="M7.5 0L11 3 7.5 6Z" fill="#555"/><path d="M12 4A5 5 0 0 1 7.5 12H6" stroke="#9cd060" stroke-width="1.8" fill="none"/><path d="M6.5 9L3 12 6.5 15Z" fill="#9cd060"/></svg><svg style="position:absolute;left:630px;top:102px" width="17" height="18" viewBox="0 0 17 18"><path d="M1 6L8.5 2.5 16 6V14L8.5 17.5 1 14Z" fill="#a9cf74"/><path d="M1 6L8.5 2.5 16 6 8.5 9.5Z" fill="#f2a93b"/><path d="M3 6.5L10 3.2M5 7.5L12 4.2M7 8.5L14 5.2" stroke="#ffd080" stroke-width="0.7"/><path d="M8.5 9.5V17.5" stroke="#c8e0a0" stroke-width="0.8"/><path d="M1 6V14L8.5 17.5V9.5Z" fill="#b8d888"/></svg><div class="t" style="left:654px;top:105px;height:14px;line-height:14px;">Listenerfassung</div><svg style="position:absolute;left:740px;top:104px" width="13" height="13" viewBox="0 0 12 12"><path d="M2 2L10 10M10 2L2 10" stroke="#666" stroke-width="3" stroke-linecap="round"/></svg><div style="left:491px;top:125px;width:1429px;height:520px;background:#f0f0f0;border-top:1px solid #a0a0a0;border-left:1px solid #a0a0a0"></div><div style="left:1191px;top:129px;width:708px;height:514px;background:#a4a2a5"></div><div style="left:1380px;top:153px;width:330px;height:464px;background:#fff;border-left:1px solid #959396;border-top:1px solid #959396"></div><div style="left:1900px;top:127px;width:18px;height:517px;background:#f0f0f0"></div><div style="left:1901px;top:128px;width:16px;height:17px;background:#f0f0f0;border-right:1px solid #c8c8c8;border-bottom:1px solid #c8c8c8;border-left:1px solid #fff;border-top:1px solid #fff"></div><svg style="position:absolute;left:1906px;top:134px" width="7" height="4" viewBox="0 0 7 4"><path d="M0 4H7L3.5 0Z" fill="#000"/></svg><div style="left:1901px;top:145px;width:16px;height:480px;background:#f0f0f0;border-right:1px solid #d0d0d0;border-bottom:1px solid #d0d0d0"></div><div style="left:1901px;top:627px;width:16px;height:17px;background:#f0f0f0;border-right:1px solid #c8c8c8;border-bottom:1px solid #c8c8c8;border-left:1px solid #fff;border-top:1px solid #fff"></div><svg style="position:absolute;left:1906px;top:633px" width="7" height="4" viewBox="0 0 7 4"><path d="M0 0H7L3.5 4Z" fill="#000"/></svg><div class="t" style="left:1381px;top:181px;width:320px;text-align:center;line-height:18px;font-size:15px;font-weight:bold;text-decoration:underline">Leistungen</div><div class="t" style="left:1421px;top:229px;line-height:12px;font-size:9.7px;font-weight:bold">aktueller Wurf</div><div class="t" style="left:1560px;top:226px;width:75px;text-align:right;line-height:12px;font-size:9.5px">1</div><div class="t" style="left:1421px;top:249px;line-height:12px;font-size:9.7px;font-weight:bold">letztes Belegdatum</div><div class="t" style="left:1421px;top:269px;line-height:12px;font-size:9.7px;font-weight:bold">letztes Abferkeldatum</div><div class="t" style="left:1421px;top:288px;line-height:12px;font-size:9.7px;font-weight:bold">letztes Absetzdatum</div><div class="t" style="left:1421px;top:308px;line-height:12px;font-size:9.7px;font-weight:bold">Produktionsbeginn</div><div class="t" style="left:1421px;top:328px;line-height:12px;font-size:9.7px;font-weight:bold">Nutzdauer in Jahren</div><div class="t" style="left:1560px;top:325px;width:75px;text-align:right;line-height:12px;font-size:9.5px">0,00</div><div class="t" style="left:1421px;top:348px;line-height:12px;font-size:9.7px;font-weight:bold">abgeschlossene W&uuml;rfe</div><div class="t" style="left:1560px;top:347px;width:75px;text-align:right;line-height:12px;font-size:9.5px">0</div><div class="t" style="left:1421px;top:368px;line-height:12px;font-size:9.7px;font-weight:bold">W&uuml;rfe pro Jahr</div><div class="t" style="left:1560px;top:367px;width:75px;text-align:right;line-height:12px;font-size:9.5px">0,0</div><div class="t" style="left:1421px;top:388px;line-height:12px;font-size:9.7px;font-weight:bold">lebend Geborene/Wurf</div><div class="t" style="left:1421px;top:408px;line-height:12px;font-size:9.7px;font-weight:bold">Abgesetzte/Wurf</div><div class="t" style="left:1421px;top:454px;line-height:12px;font-size:9.7px;font-weight:bold">Index</div><div class="t" style="left:1560px;top:453px;width:75px;text-align:right;line-height:12px;font-size:9.5px">0,00</div><div class="t" style="left:1421px;top:474px;line-height:12px;font-size:9.7px;font-weight:bold">Tendenz</div><div class="t" style="left:1421px;top:494px;line-height:12px;font-size:9.7px;font-weight:bold">Zwischenwurfzeit</div><div class="t" style="left:1560px;top:493px;width:75px;text-align:right;line-height:12px;font-size:9.5px">0,0</div><svg style="position:absolute;left:1611px;top:474px" width="16" height="11" viewBox="0 0 16 11"><path d="M1 3h8V0.5L15 5.5 9 10.5V8H1z" fill="#ffe800" stroke="#a09000" stroke-width="0.8"/></svg><div class="grp" style="left:508px;top:139px;width:378px;height:230px;"></div><div class="t" style="left:515px;top:135px;height:13px;line-height:13px;padding:0 1px 0 0;background:#f0f0f0;color:#000">Allgemein</div><div class="t" style="left:517px;top:152px;height:14px;line-height:14px;">Nummer *</div><div class="t" style="left:517px;top:176px;height:14px;line-height:14px;">Name</div><div class="t" style="left:517px;top:200px;height:14px;line-height:14px;">Geburtsdatum *</div><div class="t" style="left:517px;top:224px;height:14px;line-height:14px;">Zugangsdatum *</div><div class="t" style="left:517px;top:248px;height:14px;line-height:14px;">Rasse</div><div class="t" style="left:517px;top:272px;height:14px;line-height:14px;">Linie</div><div class="t" style="left:517px;top:296px;height:14px;line-height:14px;">Tierhalter</div><div class="t" style="left:517px;top:320px;height:14px;line-height:14px;">Stall/Platz</div><div class="t" style="left:517px;top:344px;height:14px;line-height:14px;">Abteil</div><div class="inp" style="left:628px;top:149px;width:120px;height:20px;background:#fff"></div><div class="t" style="left:631px;top:152px;height:14px;line-height:14px;color:#000">608</div><div class="inp" style="left:628px;top:173px;width:120px;height:20px;background:#fff"></div><div class="inp" style="left:628px;top:197px;width:120px;height:20px;background:#fff"></div><div class="t" style="left:628px;top:200px;width:102px;height:14px;line-height:14px;text-align:center;color:#000">03.01.1950</div><div class="btn" style="left:731px;top:199px;width:16px;height:16px"></div><svg style="position:absolute;left:736px;top:205px" width="7" height="4" viewBox="0 0 7 4"><path d="M0 0H7L3.5 4Z" fill="#000"/></svg><div class="inp" style="left:628px;top:221px;width:120px;height:20px;background:#fff"></div><div class="t" style="left:628px;top:224px;width:102px;height:14px;line-height:14px;text-align:center;color:#000">05.01.2016</div><div class="btn" style="left:731px;top:223px;width:16px;height:16px"></div><svg style="position:absolute;left:736px;top:229px" width="7" height="4" viewBox="0 0 7 4"><path d="M0 0H7L3.5 4Z" fill="#000"/></svg><div class="inp" style="left:628px;top:245px;width:120px;height:20px;background:#fff"></div><div class="t" style="left:631px;top:248px;height:14px;line-height:14px;color:#000">Ca(PIG)</div><div class="btn" style="left:731px;top:247px;width:16px;height:16px"></div><svg style="position:absolute;left:736px;top:253px" width="7" height="4" viewBox="0 0 7 4"><path d="M0 0H7L3.5 4Z" fill="#000"/></svg><div class="inp" style="left:628px;top:269px;width:120px;height:20px;background:#fff"></div><div class="btn" style="left:731px;top:271px;width:16px;height:16px"></div><svg style="position:absolute;left:736px;top:277px" width="7" height="4" viewBox="0 0 7 4"><path d="M0 0H7L3.5 4Z" fill="#000"/></svg><div class="inp" style="left:628px;top:293px;width:120px;height:20px;background:#ffffd0"></div><div class="t" style="left:631px;top:296px;height:14px;line-height:14px;color:#a0a0a0">Mustermann Max</div><div class="btn" style="left:731px;top:295px;width:16px;height:16px"></div><svg style="position:absolute;left:736px;top:301px" width="7" height="4" viewBox="0 0 7 4"><path d="M0 0H7L3.5 4Z" fill="#a0a0a0"/></svg><div class="inp" style="left:628px;top:317px;width:120px;height:20px;background:#fff"></div><div class="t" style="left:631px;top:320px;height:14px;line-height:14px;color:#000">hinten</div><div class="inp" style="left:628px;top:341px;width:120px;height:20px;background:#fff"></div><div style="left:781px;top:149px;width:89px;height:57px;background:#ffffd0"></div><div style="left:781px;top:154px;width:89px;height:52px;border:1px solid #a0a0a0;box-shadow:inset 1px 1px 0 #fff"></div><div class="t" style="left:787px;top:149px;height:14px;line-height:14px;color:#a0a0a0;background:#ffffd0;padding:0 3px 0 1px">Geschlecht *</div><svg style="position:absolute;left:790px;top:170px" width="12" height="12" viewBox="0 0 12 12"><circle cx="6" cy="6" r="5" fill="#f6f6f6" stroke="#c0c0c0"/></svg><div class="t" style="left:806px;top:169px;height:14px;line-height:14px;color:#a0a0a0">m&auml;nnlich</div><svg style="position:absolute;left:790px;top:188px" width="12" height="12" viewBox="0 0 12 12"><circle cx="6" cy="6" r="5" fill="#f6f6f6" stroke="#c0c0c0"/><circle cx="6" cy="6" r="1.6" fill="#999"/></svg><div class="t" style="left:806px;top:187px;height:14px;line-height:14px;color:#a0a0a0">weiblich</div><div class="t" style="left:784px;top:225px;height:14px;line-height:14px;letter-spacing:-0.2px">Tier merzen</div><div style="left:844px;top:226px;width:12px;height:12px;border-top:1px solid #bcbcbc;border-left:1px solid #bcbcbc;border-right:1px solid #f8f8f8;border-bottom:1px solid #f8f8f8;background:#fff"></div><div class="grp" style="left:508px;top:380px;width:378px;height:258px;"></div><div class="t" style="left:515px;top:376px;height:13px;line-height:13px;padding:0 1px 0 0;background:#f0f0f0;color:#000">Identifikation</div><div class="t" style="left:517px;top:392px;height:14px;line-height:14px;letter-spacing:-0.2px">T&auml;towiernummer</div><div class="t" style="left:517px;top:416px;height:14px;line-height:14px;letter-spacing:-0.2px">Transpondernummer</div><div class="t" style="left:517px;top:440px;height:14px;line-height:14px;letter-spacing:-0.2px">VVO-Nummer</div><div class="t" style="left:517px;top:464px;height:14px;line-height:14px;letter-spacing:-0.2px">PVC-Nummer</div><div class="t" style="left:517px;top:488px;height:14px;line-height:14px;letter-spacing:-0.2px">Herdbuchnummer</div><div class="t" style="left:517px;top:512px;height:14px;line-height:14px;letter-spacing:-0.2px">Chip-Nummer</div><div class="t" style="left:517px;top:536px;height:14px;line-height:14px;letter-spacing:-0.2px">Hybridart und -nummer</div><div class="t" style="left:517px;top:560px;height:14px;line-height:14px;letter-spacing:-0.2px">Genotypisierungs-Nr.</div><div class="t" style="left:517px;top:584px;height:14px;line-height:14px;letter-spacing:-0.2px">Merkmal</div><div class="t" style="left:517px;top:608px;height:14px;line-height:14px;letter-spacing:-0.2px">Stresstest</div><div class="inp" style="left:628px;top:390px;width:120px;height:20px;background:#fff"></div><div class="inp" style="left:628px;top:414px;width:120px;height:20px;background:#fff"></div><div class="inp" style="left:628px;top:438px;width:120px;height:20px;background:#fff"></div><div class="inp" style="left:628px;top:462px;width:120px;height:20px;background:#fff"></div><div class="inp" style="left:628px;top:486px;width:120px;height:20px;background:#fff"></div><div class="inp" style="left:628px;top:510px;width:120px;height:20px;background:#fff"></div><div class="inp" style="left:628px;top:534px;width:120px;height:20px;background:#fff"></div><div class="btn" style="left:731px;top:536px;width:16px;height:16px"></div><svg style="position:absolute;left:736px;top:542px" width="7" height="4" viewBox="0 0 7 4"><path d="M0 0H7L3.5 4Z" fill="#000"/></svg><div class="inp" style="left:760px;top:534px;width:112px;height:20px;background:#fff"></div><div class="inp" style="left:628px;top:558px;width:120px;height:20px;background:#fff"></div><div class="inp" style="left:628px;top:582px;width:241px;height:20px;background:#fff"></div><div class="inp" style="left:628px;top:606px;width:111px;height:20px;background:#fff"></div><div class="btn" style="left:722px;top:608px;width:16px;height:16px"></div><svg style="position:absolute;left:727px;top:614px" width="7" height="4" viewBox="0 0 7 4"><path d="M0 0H7L3.5 4Z" fill="#000"/></svg><div class="grp" style="left:892px;top:139px;width:280px;height:131px;"></div><div class="t" style="left:899px;top:135px;height:13px;line-height:13px;padding:0 1px 0 0;background:#f0f0f0;color:#000">Sau</div><div class="t" style="left:901px;top:152px;height:14px;line-height:14px;">Gruppe</div><div class="inp" style="left:1012px;top:149px;width:120px;height:20px;background:#fff"></div><div class="t" style="left:900px;top:176px;height:14px;line-height:14px;">letzte Spitze:</div><div class="inp" style="left:1012px;top:176px;width:120px;height:20px;background:#ffffd0"></div><div class="t" style="left:1012px;top:179px;width:115px;height:14px;line-height:14px;text-align:right;color:#a0a0a0">0</div><div class="t" style="left:900px;top:200px;height:14px;line-height:14px;">aktueller Wurf</div><div class="inp" style="left:1012px;top:198px;width:120px;height:20px;background:#ffffd0"></div><div class="t" style="left:1012px;top:201px;width:115px;height:14px;line-height:14px;text-align:right;color:#a0a0a0">1</div><div style="left:901px;top:224px;width:78px;height:17px;background:#ffffd0"></div><div class="t" style="left:903px;top:226px;height:14px;line-height:14px;color:#a0a0a0;letter-spacing:-0.3px">Sammelwurf</div><div style="left:965px;top:227px;width:12px;height:12px;border-top:1px solid #b0b0b0;border-left:1px solid #b0b0b0;border-right:1px solid #f8f8f8;border-bottom:1px solid #f8f8f8;background:#f0f0f0"></div><div class="t" style="left:901px;top:248px;height:14px;line-height:14px;">F&uuml;tterungsgruppe</div><div class="grp" style="left:892px;top:381px;width:280px;height:257px;"></div><div class="t" style="left:899px;top:377px;height:13px;line-height:13px;padding:0 1px 0 0;background:#f0f0f0;color:#000">Abstammung</div><div class="t" style="left:1015px;top:395px;height:14px;line-height:14px;letter-spacing:-0.2px">eigene Nachzucht</div><div style="left:1104px;top:396px;width:12px;height:12px;border-top:1px solid #bcbcbc;border-left:1px solid #bcbcbc;border-right:1px solid #f8f8f8;border-bottom:1px solid #f8f8f8;background:#fff"></div><div class="t" style="left:901px;top:418px;height:14px;line-height:14px;">Mutter / Wurf-Nr.</div><div class="inp" style="left:1012px;top:415px;width:120px;height:20px;background:#fff"></div><div class="btn" style="left:1115px;top:417px;width:16px;height:16px"></div><svg style="position:absolute;left:1120px;top:423px" width="7" height="4" viewBox="0 0 7 4"><path d="M0 0H7L3.5 4Z" fill="#000"/></svg><div class="inp" style="left:1135px;top:415px;width:21px;height:20px;background:#fff"></div><div class="t" style="left:901px;top:442px;height:14px;line-height:14px;">Spitzennummer</div><div class="inp" style="left:1012px;top:439px;width:120px;height:20px;background:#fff"></div><div class="t" style="left:901px;top:466px;height:14px;line-height:14px;">Vater 1</div><div class="inp" style="left:1012px;top:463px;width:144px;height:20px;background:#fff"></div><div class="btn" style="left:1139px;top:465px;width:16px;height:16px"></div><svg style="position:absolute;left:1144px;top:471px" width="7" height="4" viewBox="0 0 7 4"><path d="M0 0H7L3.5 4Z" fill="#000"/></svg><div class="t" style="left:901px;top:490px;height:14px;line-height:14px;">Vater 2</div><div class="inp" style="left:1012px;top:487px;width:144px;height:20px;background:#fff"></div><div class="btn" style="left:1139px;top:489px;width:16px;height:16px"></div><svg style="position:absolute;left:1144px;top:495px" width="7" height="4" viewBox="0 0 7 4"><path d="M0 0H7L3.5 4Z" fill="#000"/></svg><div class="t" style="left:901px;top:514px;height:14px;line-height:14px;letter-spacing:-0.33px">Abstammungsnummer</div><div class="inp" style="left:1012px;top:511px;width:120px;height:20px;background:#fff"></div><div style="left:491px;top:645px;width:1429px;height:9px;background:#f0f0f0"></div><div style="left:990px;top:645px;width:430px;height:6px;background:linear-gradient(#fff,#a8bcc8);border:1px solid #98a8b4;border-radius:3px"></div><svg style="position:absolute;left:1202px;top:646px" width="8" height="5" viewBox="0 0 8 5"><path d="M1 4.5L4 1.5 7 4.5" stroke="#000" stroke-width="1.3" fill="none"/></svg><div style="left:491px;top:653px;width:1429px;height:1px;background:#fff"></div><div style="left:1917px;top:653px;width:2px;height:340px;background:#a0a0a0"></div><div style="left:491px;top:992px;width:1429px;height:1px;background:#a0a0a0"></div><div style="left:492px;top:654px;width:30px;height:338px;border-top:1px solid #a0a0a0;border-left:1px solid #a0a0a0;border-right:1px solid #fff"></div><div style="left:523px;top:655px;width:91px;height:20px;background:#b4d0f4"></div><div style="left:525px;top:657px;width:87px;height:16px;border:1px dotted #555"></div><div class="t" style="left:529px;top:658px;height:14px;line-height:14px;">Zugang/Abgang</div><div style="left:615px;top:656px;width:68px;height:1px;background:#fff"></div><div style="left:615px;top:656px;width:1px;height:19px;background:#fff"></div><div style="left:684px;top:656px;width:55px;height:1px;background:#fff"></div><div style="left:684px;top:656px;width:1px;height:19px;background:#fff"></div><div style="left:740px;top:656px;width:63px;height:1px;background:#fff"></div><div style="left:740px;top:656px;width:1px;height:19px;background:#fff"></div><div style="left:614px;top:658px;width:1px;height:17px;background:#c0c0c0"></div><div class="t" style="left:618px;top:659px;height:14px;line-height:14px;">Kommentare</div><div style="left:683px;top:658px;width:1px;height:17px;background:#c0c0c0"></div><div class="t" style="left:690px;top:659px;height:14px;line-height:14px;">Selektion</div><div style="left:739px;top:658px;width:1px;height:17px;background:#c0c0c0"></div><div class="t" style="left:745px;top:659px;height:14px;line-height:14px;">Bewertung</div><div style="left:803px;top:658px;width:1px;height:17px;background:#c0c0c0"></div><div style="left:804px;top:674px;width:1113px;height:1px;background:#fff"></div><div class="grp" style="left:531px;top:685px;width:380px;height:113px;"></div><div class="t" style="left:538px;top:681px;height:13px;line-height:13px;padding:0 1px 0 0;background:#f0f0f0;color:#000">Zugang</div><div class="t" style="left:540px;top:697px;height:14px;line-height:14px;">Lieferant</div><div class="t" style="left:540px;top:721px;height:14px;line-height:14px;">Herkunft</div><div class="t" style="left:540px;top:745px;height:14px;line-height:14px;">Transportrausche</div><div class="t" style="left:540px;top:769px;height:14px;line-height:14px;">Status bei Zugang</div><div class="inp" style="left:635px;top:694px;width:119px;height:20px;background:#fff"></div><div class="t" style="left:638px;top:697px;height:14px;line-height:14px;color:#000">Reich Peter</div><div class="btn" style="left:737px;top:696px;width:16px;height:16px"></div><svg style="position:absolute;left:742px;top:702px" width="7" height="4" viewBox="0 0 7 4"><path d="M0 0H7L3.5 4Z" fill="#000"/></svg><div class="inp" style="left:635px;top:718px;width:119px;height:20px;background:#fff"></div><div class="t" style="left:638px;top:721px;height:14px;line-height:14px;color:#000">Sonstige Herkunft</div><div class="btn" style="left:737px;top:720px;width:16px;height:16px"></div><svg style="position:absolute;left:742px;top:726px" width="7" height="4" viewBox="0 0 7 4"><path d="M0 0H7L3.5 4Z" fill="#000"/></svg><div class="inp" style="left:635px;top:742px;width:119px;height:20px;background:#fff"></div><div class="btn" style="left:737px;top:744px;width:16px;height:16px"></div><svg style="position:absolute;left:742px;top:750px" width="7" height="4" viewBox="0 0 7 4"><path d="M0 0H7L3.5 4Z" fill="#000"/></svg><div class="inp" style="left:635px;top:766px;width:119px;height:20px;background:#fff"></div><div class="btn" style="left:737px;top:768px;width:16px;height:16px"></div><svg style="position:absolute;left:742px;top:774px" width="7" height="4" viewBox="0 0 7 4"><path d="M0 0H7L3.5 4Z" fill="#000"/></svg><div class="t" style="left:772px;top:697px;height:14px;line-height:14px;">Preis</div><div class="inp" style="left:807px;top:694px;width:89px;height:20px;background:#fff"></div><div class="t" style="left:807px;top:697px;width:84px;height:14px;line-height:14px;text-align:right;color:#000">280,00</div><div class="grp" style="left:923px;top:685px;width:255px;height:113px;"></div><div class="t" style="left:930px;top:681px;height:13px;line-height:13px;padding:0 1px 0 0;background:#f0f0f0;color:#a0a0a0">Abgang</div><div class="t" style="left:932px;top:697px;height:14px;line-height:14px;">Abgangsdatum</div><div class="t" style="left:932px;top:721px;height:14px;line-height:14px;">Abnehmer</div><div class="t" style="left:932px;top:745px;height:14px;line-height:14px;">Abgangspreis</div><div class="t" style="left:932px;top:769px;height:14px;line-height:14px;">Abgangsursache</div><div class="inp" style="left:1043px;top:694px;width:119px;height:20px;background:#ffffd0"></div><div class="btn" style="left:1145px;top:696px;width:16px;height:16px"></div><svg style="position:absolute;left:1150px;top:702px" width="7" height="4" viewBox="0 0 7 4"><path d="M0 0H7L3.5 4Z" fill="#a0a0a0"/></svg><div class="inp" style="left:1043px;top:718px;width:119px;height:20px;background:#ffffd0"></div><div class="inp" style="left:1043px;top:742px;width:119px;height:20px;background:#ffffd0"></div><div class="inp" style="left:1043px;top:766px;width:119px;height:20px;background:#ffffd0"></div><div style="left:74px;top:42px;width:200px;height:328px;background:#f0f0f0;border:1px solid #979797;box-shadow:3px 3px 3px rgba(0,0,0,0.28)"></div><div class="t" style="left:98px;top:47px;height:14px;line-height:14px;">Schwein</div><svg style="position:absolute;left:263px;top:50px" width="4" height="7" viewBox="0 0 4 7"><path d="M0 0L4 3.5L0 7Z" fill="#000"/></svg><div class="t" style="left:98px;top:67px;height:14px;line-height:14px;">Betriebsverwaltung</div><div class="t" style="left:98px;top:87px;height:14px;line-height:14px;">Betriebsgrunddaten</div><svg style="position:absolute;left:263px;top:90px" width="4" height="7" viewBox="0 0 4 7"><path d="M0 0L4 3.5L0 7Z" fill="#000"/></svg><div class="t" style="left:98px;top:107px;height:14px;line-height:14px;">Kostenrechnung</div><svg style="position:absolute;left:263px;top:110px" width="4" height="7" viewBox="0 0 4 7"><path d="M0 0L4 3.5L0 7Z" fill="#000"/></svg><div class="t" style="left:98px;top:127px;height:14px;line-height:14px;">Kennzeichen</div><div style="left:76px;top:146px;width:196px;height:1px;background:#bdbdbd"></div><div class="t" style="left:98px;top:153px;height:14px;line-height:14px;">Adressverwaltung</div><svg style="position:absolute;left:263px;top:156px" width="4" height="7" viewBox="0 0 4 7"><path d="M0 0L4 3.5L0 7Z" fill="#000"/></svg><div class="t" style="left:98px;top:173px;height:14px;line-height:14px;">Anbau und Arbeitsorte</div><svg style="position:absolute;left:263px;top:176px" width="4" height="7" viewBox="0 0 4 7"><path d="M0 0L4 3.5L0 7Z" fill="#000"/></svg><div style="left:76px;top:190px;width:196px;height:20px;background:#0078d7"></div><div class="t" style="left:98px;top:193px;height:14px;line-height:14px;">Artikel</div><svg style="position:absolute;left:263px;top:196px" width="4" height="7" viewBox="0 0 4 7"><path d="M0 0L4 3.5L0 7Z" fill="#000"/></svg><div class="t" style="left:98px;top:213px;height:14px;line-height:14px;">Maschinengrunddaten</div><svg style="position:absolute;left:263px;top:216px" width="4" height="7" viewBox="0 0 4 7"><path d="M0 0L4 3.5L0 7Z" fill="#000"/></svg><div style="left:76px;top:232px;width:196px;height:1px;background:#bdbdbd"></div><div class="t" style="left:98px;top:239px;height:14px;line-height:14px;">Arbeitsverfahren</div><div class="t" style="left:98px;top:259px;height:14px;line-height:14px;">Liste Arbeitsverfahren (Report)</div><div style="left:76px;top:278px;width:196px;height:1px;background:#bdbdbd"></div><div class="t" style="left:98px;top:285px;height:14px;line-height:14px;">Textvorlagen</div><div class="t" style="left:98px;top:305px;height:14px;line-height:14px;">D&uuml;ngeplanung</div><svg style="position:absolute;left:263px;top:308px" width="4" height="7" viewBox="0 0 4 7"><path d="M0 0L4 3.5L0 7Z" fill="#000"/></svg><div style="left:76px;top:324px;width:196px;height:1px;background:#bdbdbd"></div><div class="t" style="left:98px;top:331px;height:14px;line-height:14px;">Fl&auml;chengrunddaten/Vertr&auml;ge</div><svg style="position:absolute;left:263px;top:334px" width="4" height="7" viewBox="0 0 4 7"><path d="M0 0L4 3.5L0 7Z" fill="#000"/></svg><div class="t" style="left:98px;top:351px;height:14px;line-height:14px;">Lagergrunddaten</div><svg style="position:absolute;left:263px;top:354px" width="4" height="7" viewBox="0 0 4 7"><path d="M0 0L4 3.5L0 7Z" fill="#000"/></svg><div style="left:273px;top:189px;width:182px;height:287px;background:#f0f0f0;border:1px solid #979797;box-shadow:3px 3px 3px rgba(0,0,0,0.28)"></div><div class="t" style="left:297px;top:193px;height:14px;line-height:14px;">Gesamt&uuml;bersicht Artikel</div><div style="left:275px;top:212px;width:178px;height:1px;background:#bdbdbd"></div><div class="t" style="left:297px;top:219px;height:14px;line-height:14px;">S<u>a</u>atgut</div><div class="t" style="left:297px;top:239px;height:14px;line-height:14px;">Ernte<u>p</u>rodukte</div><div class="t" style="left:297px;top:259px;height:14px;line-height:14px;">Nebenprodukte</div><div style="left:275px;top:278px;width:178px;height:1px;background:#bdbdbd"></div><div class="t" style="left:297px;top:285px;height:14px;line-height:14px;">organische D&uuml;ngemittel</div><div class="t" style="left:297px;top:305px;height:14px;line-height:14px;">mineralische D&uuml;ngemittel</div><div class="t" style="left:297px;top:325px;height:14px;line-height:14px;">betriebliche Ausbringkosten</div><div class="t" style="left:297px;top:345px;height:14px;line-height:14px;">Pflanzenschutz</div><svg style="position:absolute;left:442px;top:348px" width="4" height="7" viewBox="0 0 4 7"><path d="M0 0L4 3.5L0 7Z" fill="#000"/></svg><div style="left:275px;top:364px;width:178px;height:1px;background:#bdbdbd"></div><div class="t" style="left:297px;top:371px;height:14px;line-height:14px;"><u>B</u>etriebsmittel</div><div class="t" style="left:297px;top:391px;height:14px;line-height:14px;">Sonstige Artikel</div><div class="t" style="left:297px;top:411px;height:14px;line-height:14px;">Futtermittel</div><div class="t" style="left:297px;top:431px;height:14px;line-height:14px;">St&uuml;ckliste/Tankmischungen</div><div style="left:275px;top:450px;width:178px;height:1px;background:#bdbdbd"></div><div style="left:275px;top:454px;width:178px;height:20px;background:#0078d7"></div><div class="t" style="left:297px;top:457px;height:14px;line-height:14px;">Medikamente</div></body></html>
